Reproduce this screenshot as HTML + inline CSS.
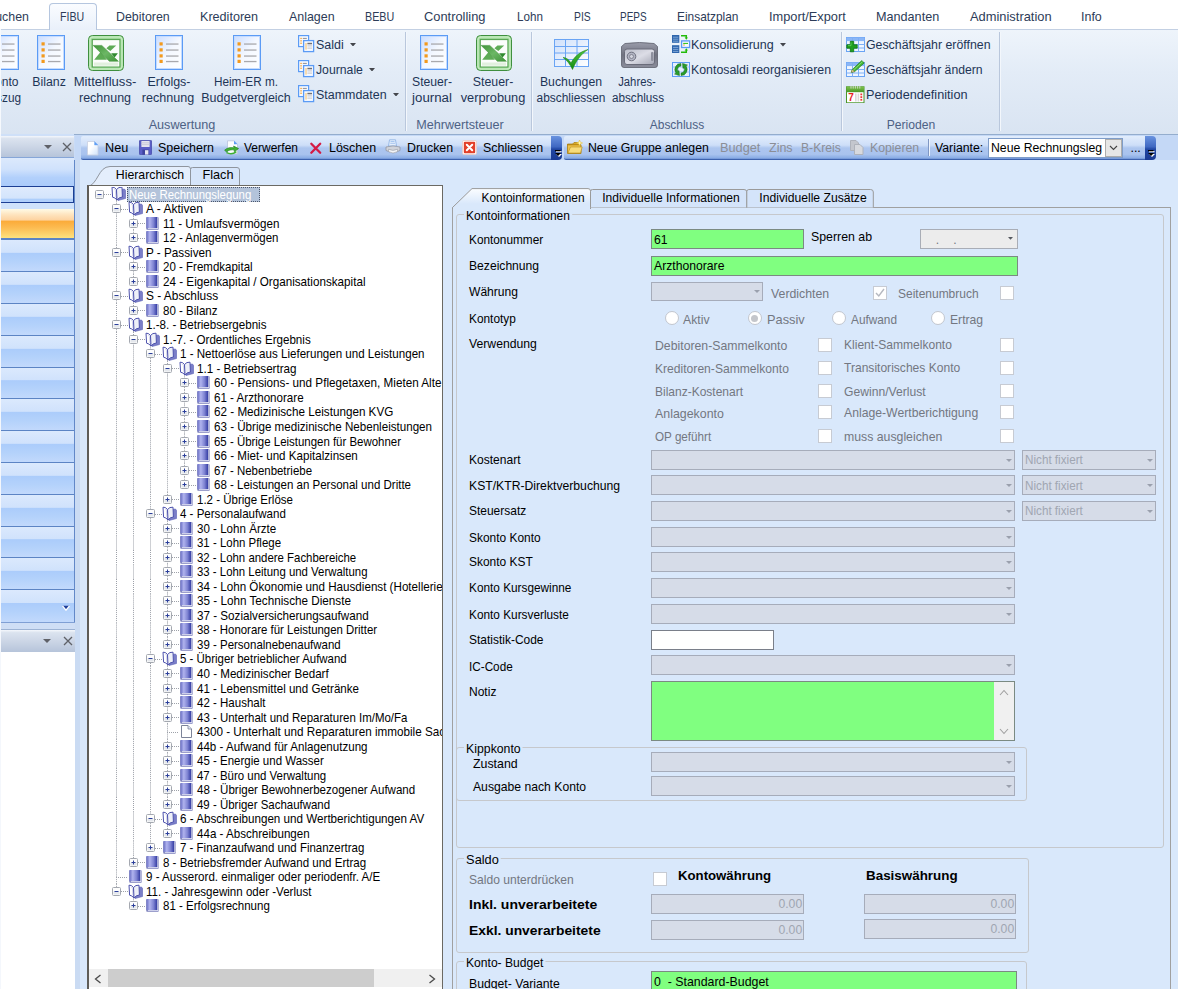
<!DOCTYPE html>
<html lang="de"><head><meta charset="utf-8"><title>FIBU - Kontenplan</title>
<style>
html,body{margin:0;padding:0;}
body{width:1178px;height:989px;overflow:hidden;background:#d9e8fb;font-family:"Liberation Sans",sans-serif;}
#app{position:relative;width:1178px;height:989px;overflow:hidden;background:#d9e8fb;}
.b{position:absolute;box-sizing:border-box;}
.t{position:absolute;white-space:nowrap;line-height:1;transform:translateY(-50%);color:#000;}
.ctr{transform:translate(-50%,-50%);}
.menu{font-size:13px;color:#2d3c58;}
.rib{font-size:12.3px;color:#1e3556;}
.glabel{color:#4d6185;}
.mtab{background:linear-gradient(#fafcff,#e9f0fa);border:1px solid #b5c6df;border-bottom:none;border-radius:4px 4px 0 0;}
.ribbon{background:linear-gradient(#eef4fb 0%,#e3ecf7 40%,#d9e4f2 100%);border-top:1px solid #c3d0e3;border-bottom:2px solid #94adcd;}
.shead{background:linear-gradient(#f4f7fc 0%,#dbe3ef 12%,#ccd6e6 50%,#b6c4da 100%);border-bottom:1px solid #86a6d8;}
.srow{background:linear-gradient(#dbe9fd 0%,#d0e2fc 40%,#abccfb 42%,#b4d2fb 70%,#c2d9fc 100%);border-top:1px solid #5c84c4;}
.sorange{background:linear-gradient(#fffbe6 0%,#fee3bd 20%,#fdd3a0 38%,#fbab3a 42%,#fcbc52 65%,#fee27e 100%);border-bottom:1px solid #5c84c4;}
.tbar{background:linear-gradient(#e2edfc 0%,#cddef8 40%,#adc6ef 52%,#a9c3ee 80%,#8dafe6 94%,#6d90d4 100%);border-bottom:1px solid #3d62ad;}
.tgrip{background:linear-gradient(#6a93df 0%,#3f68c2 45%,#2147a3 55%,#1a3a92 100%);border-radius:0 4px 4px 0;}
.tb{font-size:12.3px;color:#000;}
.tb.tdis{color:#8b8e96;}
.f12{font-size:12.2px;}
.f12b{font-size:12.2px;font-weight:bold;}
.gray{color:#737781;}
.lgray{color:#a0a6b2;}
.tr{font-size:12.8px;}
.dis{background:#d6dce8;border:1px solid #a6acba;}
.grn{background:#80ff80;border:1px solid #7b8a82;}

</style></head>
<body>
<div id="app">
<svg width="0" height="0" style="position:absolute"><defs><linearGradient id="bk" x1="0" y1="0" x2="1" y2="0"><stop offset="0" stop-color="#6a6fc4"/><stop offset=".3" stop-color="#b0b3ee"/><stop offset=".65" stop-color="#7e83d2"/><stop offset="1" stop-color="#3038a0"/></linearGradient></defs></svg>
<div class="b" style="left:0px;top:0px;width:1178px;height:30px;background:#fff;"></div>
<div class="b ribbon" style="left:1px;top:29px;width:1177px;height:106.5px;"></div>
<div class="b mtab" style="left:49px;top:3px;width:48px;height:27px;"></div>
<div class="t menu" style="left:-13px;top:15.7px;transform:translateY(-50%) scaleX(0.9502);transform-origin:0 50%;">Buchen</div>
<div class="t menu" style="left:60px;top:15.7px;transform:translateY(-50%) scaleX(0.8169);transform-origin:0 50%;">FIBU</div>
<div class="t menu" style="left:116px;top:15.7px;transform:translateY(-50%) scaleX(0.9525);transform-origin:0 50%;">Debitoren</div>
<div class="t menu" style="left:200px;top:15.7px;transform:translateY(-50%) scaleX(0.9686);transform-origin:0 50%;">Kreditoren</div>
<div class="t menu" style="left:289px;top:15.7px;transform:translateY(-50%) scaleX(0.9556);transform-origin:0 50%;">Anlagen</div>
<div class="t menu" style="left:364.5px;top:15.7px;transform:translateY(-50%) scaleX(0.8275);transform-origin:0 50%;">BEBU</div>
<div class="t menu" style="left:423.5px;top:15.7px;transform:translateY(-50%) scaleX(0.9894);transform-origin:0 50%;">Controlling</div>
<div class="t menu" style="left:516.5px;top:15.7px;transform:translateY(-50%) scaleX(0.8955);transform-origin:0 50%;">Lohn</div>
<div class="t menu" style="left:573.5px;top:15.7px;transform:translateY(-50%) scaleX(0.7964);transform-origin:0 50%;">PIS</div>
<div class="t menu" style="left:620.2px;top:15.7px;transform:translateY(-50%) scaleX(0.7668);transform-origin:0 50%;">PEPS</div>
<div class="t menu" style="left:677px;top:15.7px;transform:translateY(-50%) scaleX(0.9149);transform-origin:0 50%;">Einsatzplan</div>
<div class="t menu" style="left:768.8px;top:15.7px;transform:translateY(-50%) scaleX(0.9842);transform-origin:0 50%;">Import/Export</div>
<div class="t menu" style="left:876px;top:15.7px;transform:translateY(-50%) scaleX(0.9714);transform-origin:0 50%;">Mandanten</div>
<div class="t menu" style="left:969.5px;top:15.7px;transform:translateY(-50%) scaleX(0.9906);transform-origin:0 50%;">Administration</div>
<div class="t menu" style="left:1080.5px;top:15.7px;transform:translateY(-50%) scaleX(0.9591);transform-origin:0 50%;">Info</div>
<div class="b" style="left:405px;top:32px;width:1px;height:99px;background:#b9c7dc;"></div>
<div class="b" style="left:406px;top:32px;width:1px;height:99px;background:#f3f7fc;"></div>
<div class="b" style="left:531px;top:32px;width:1px;height:99px;background:#b9c7dc;"></div>
<div class="b" style="left:532px;top:32px;width:1px;height:99px;background:#f3f7fc;"></div>
<div class="b" style="left:840.5px;top:32px;width:1px;height:99px;background:#b9c7dc;"></div>
<div class="b" style="left:841.5px;top:32px;width:1px;height:99px;background:#f3f7fc;"></div>
<div class="b" style="left:999px;top:32px;width:1px;height:99px;background:#b9c7dc;"></div>
<div class="b" style="left:1000px;top:32px;width:1px;height:99px;background:#f3f7fc;"></div>
<div class="t rib glabel ctr" style="left:181.8px;top:125.3px;transform:translate(-50%,-50%) scaleX(1.0271);">Auswertung</div>
<div class="t rib glabel ctr" style="left:459.9px;top:125.3px;transform:translate(-50%,-50%) scaleX(1.0241);">Mehrwertsteuer</div>
<div class="t rib glabel ctr" style="left:677.1px;top:125.3px;transform:translate(-50%,-50%) scaleX(0.9706);">Abschluss</div>
<div class="t rib glabel ctr" style="left:910.5px;top:125.3px;transform:translate(-50%,-50%) scaleX(0.9871);">Perioden</div>
<svg class="b" style="left:-9px;top:35px;" width="28" height="35" viewBox="0 0 28 35"><defs><linearGradient id="lg1" x1="0" y1="0" x2="1" y2="1"><stop offset="0" stop-color="#c9dcff"/><stop offset=".5" stop-color="#f4f8ff"/><stop offset="1" stop-color="#ffffff"/></linearGradient></defs>
<rect x="0.5" y="0.5" width="27" height="34" fill="url(#lg1)" stroke="#5b9bf5" stroke-width="1"/>
<rect x="1.5" y="1.5" width="25" height="32" fill="none" stroke="#c4dbff" stroke-width="1"/><rect x="4.5" y="7.3" width="3.2" height="3.2" fill="#f39a1e"/><rect x="11" y="8.4" width="12.5" height="1.3" fill="#a9a9ad"/><rect x="4.5" y="13.3" width="3.2" height="3.2" fill="#f39a1e"/><rect x="11" y="14.4" width="12.5" height="1.3" fill="#a9a9ad"/><rect x="4.5" y="19.3" width="3.2" height="3.2" fill="#f39a1e"/><rect x="11" y="20.4" width="12.5" height="1.3" fill="#a9a9ad"/><rect x="4.5" y="24.8" width="3.2" height="3.2" fill="#f39a1e"/><rect x="11" y="25.9" width="12.5" height="1.3" fill="#a9a9ad"/></svg>
<div class="t rib" style="left:-13.3px;top:82.3px;transform:translateY(-50%) scaleX(0.9801);transform-origin:0 50%;">Konto</div>
<div class="t rib" style="left:-17px;top:98.3px;transform:translateY(-50%) scaleX(0.9582);transform-origin:0 50%;">auszug</div>
<svg class="b" style="left:37px;top:35px;" width="28" height="35" viewBox="0 0 28 35"><defs><linearGradient id="lg2" x1="0" y1="0" x2="1" y2="1"><stop offset="0" stop-color="#c9dcff"/><stop offset=".5" stop-color="#f4f8ff"/><stop offset="1" stop-color="#ffffff"/></linearGradient></defs>
<rect x="0.5" y="0.5" width="27" height="34" fill="url(#lg2)" stroke="#5b9bf5" stroke-width="1"/>
<rect x="1.5" y="1.5" width="25" height="32" fill="none" stroke="#c4dbff" stroke-width="1"/><rect x="4.5" y="7.3" width="3.2" height="3.2" fill="#f39a1e"/><rect x="11" y="8.4" width="12.5" height="1.3" fill="#a9a9ad"/><rect x="4.5" y="13.3" width="3.2" height="3.2" fill="#f39a1e"/><rect x="11" y="14.4" width="12.5" height="1.3" fill="#a9a9ad"/><rect x="4.5" y="19.3" width="3.2" height="3.2" fill="#f39a1e"/><rect x="11" y="20.4" width="12.5" height="1.3" fill="#a9a9ad"/><rect x="4.5" y="24.8" width="3.2" height="3.2" fill="#f39a1e"/><rect x="11" y="25.9" width="12.5" height="1.3" fill="#a9a9ad"/></svg>
<div class="t rib ctr" style="left:48.9px;top:82.3px;transform:translate(-50%,-50%) scaleX(1.0030);">Bilanz</div>
<svg class="b" style="left:88px;top:35px;" width="36" height="36" viewBox="0 0 36 36"><defs><linearGradient id="xg1" x1="0" y1="0" x2="1" y2="1"><stop offset="0" stop-color="#3f9438"/><stop offset=".5" stop-color="#6cb765"/><stop offset="1" stop-color="#3f9438"/></linearGradient></defs>
<rect x="0.5" y="0.5" width="35" height="35" rx="4" fill="#9fd89a" stroke="#3f8f3f"/>
<rect x="2" y="2" width="32" height="32" rx="3" fill="none" stroke="#c4ebbf" stroke-width="1.4"/>
<rect x="4.3" y="4.6" width="27.6" height="27.4" fill="#fbfdfb" stroke="#4fa04a" stroke-width="1"/>
<rect x="6" y="27.5" width="24" height="3.2" fill="#e1f0de"/>
<path d="M6.2 24.8 L12.5 17 L19 24.8 Z" fill="#5dab55"/>
<path d="M21.4 10.4 H28.2 L22.3 16 L18.4 13.2 Z" fill="#5dab55"/>
<path d="M23.1 18.3 H29.9 L26.6 22.6 Z" fill="#2f8a2e"/>
<path d="M5.1 10.4 H13.8 L30.4 26.3 H21.4 Z" fill="url(#xg1)" stroke="#3a8c35" stroke-width=".5"/></svg>
<div class="t rib ctr" style="left:105.4px;top:82.3px;transform:translate(-50%,-50%) scaleX(1.0652);">Mittelfluss-</div>
<div class="t rib ctr" style="left:105px;top:98.3px;transform:translate(-50%,-50%) scaleX(1.0140);">rechnung</div>
<svg class="b" style="left:155px;top:35px;" width="28" height="35" viewBox="0 0 28 35"><defs><linearGradient id="lg3" x1="0" y1="0" x2="1" y2="1"><stop offset="0" stop-color="#c9dcff"/><stop offset=".5" stop-color="#f4f8ff"/><stop offset="1" stop-color="#ffffff"/></linearGradient></defs>
<rect x="0.5" y="0.5" width="27" height="34" fill="url(#lg3)" stroke="#5b9bf5" stroke-width="1"/>
<rect x="1.5" y="1.5" width="25" height="32" fill="none" stroke="#c4dbff" stroke-width="1"/><rect x="4.5" y="7.3" width="3.2" height="3.2" fill="#f39a1e"/><rect x="11" y="8.4" width="12.5" height="1.3" fill="#a9a9ad"/><rect x="4.5" y="13.3" width="3.2" height="3.2" fill="#f39a1e"/><rect x="11" y="14.4" width="12.5" height="1.3" fill="#a9a9ad"/><rect x="4.5" y="19.3" width="3.2" height="3.2" fill="#f39a1e"/><rect x="11" y="20.4" width="12.5" height="1.3" fill="#a9a9ad"/><rect x="4.5" y="24.8" width="3.2" height="3.2" fill="#f39a1e"/><rect x="11" y="25.9" width="12.5" height="1.3" fill="#a9a9ad"/></svg>
<div class="t rib ctr" style="left:168.7px;top:82.3px;transform:translate(-50%,-50%) scaleX(1.0147);">Erfolgs-</div>
<div class="t rib ctr" style="left:168.3px;top:98.3px;transform:translate(-50%,-50%) scaleX(1.0218);">rechnung</div>
<svg class="b" style="left:232.5px;top:35px;" width="28" height="35" viewBox="0 0 28 35"><defs><linearGradient id="lg4" x1="0" y1="0" x2="1" y2="1"><stop offset="0" stop-color="#c9dcff"/><stop offset=".5" stop-color="#f4f8ff"/><stop offset="1" stop-color="#ffffff"/></linearGradient></defs>
<rect x="0.5" y="0.5" width="27" height="34" fill="url(#lg4)" stroke="#5b9bf5" stroke-width="1"/>
<rect x="1.5" y="1.5" width="25" height="32" fill="none" stroke="#c4dbff" stroke-width="1"/><rect x="4.5" y="7.3" width="3.2" height="3.2" fill="#f39a1e"/><rect x="11" y="8.4" width="12.5" height="1.3" fill="#a9a9ad"/><rect x="4.5" y="13.3" width="3.2" height="3.2" fill="#f39a1e"/><rect x="11" y="14.4" width="12.5" height="1.3" fill="#a9a9ad"/><rect x="4.5" y="19.3" width="3.2" height="3.2" fill="#f39a1e"/><rect x="11" y="20.4" width="12.5" height="1.3" fill="#a9a9ad"/><rect x="4.5" y="24.8" width="3.2" height="3.2" fill="#f39a1e"/><rect x="11" y="25.9" width="12.5" height="1.3" fill="#a9a9ad"/></svg>
<div class="t rib ctr" style="left:245.5px;top:82.3px;transform:translate(-50%,-50%) scaleX(0.9574);">Heim-ER m.</div>
<div class="t rib ctr" style="left:245.5px;top:98.3px;transform:translate(-50%,-50%) scaleX(1.0160);">Budgetvergleich</div>
<svg class="b" style="left:298px;top:34.8px;" width="17" height="18" viewBox="0 0 17 18"><rect x="0.6" y="0.6" width="10" height="11" fill="#f7faff" stroke="#5b9bf5" stroke-width="1.2"/>
<g fill="#f39a1e"><rect x="2.4" y="2.8" width="1.3" height="1.3"/><rect x="2.4" y="5.2" width="1.3" height="1.3"/><rect x="2.4" y="7.6" width="1.3" height="1.3"/></g><path d="M4.8 3.4 H8.8" stroke="#8d8d93" stroke-width="1"/>
<rect x="5.6" y="5.6" width="10" height="11" fill="#f7faff" stroke="#5b9bf5" stroke-width="1.3"/>
<rect x="7.4" y="8" width="1.2" height="6.6" fill="#f7c777"/><rect x="9.4" y="7.8" width="4.6" height="1.5" fill="#6f6f75"/><rect x="9.4" y="10.4" width="4.6" height="1" fill="#c3c3c8"/><rect x="9.4" y="12.6" width="4.6" height="1" fill="#c3c3c8"/></svg>
<div class="t rib" style="left:316.2px;top:45.099999999999994px;transform:translateY(-50%) scaleX(1.0161);transform-origin:0 50%;">Saldi</div>
<svg class="b" style="left:350px;top:42.8px;" width="6" height="3.5" viewBox="0 0 6 3.5"><path d="M0 0 H6 L3.0 3.5 Z" fill="#44464c"/></svg>
<svg class="b" style="left:298px;top:59.8px;" width="17" height="18" viewBox="0 0 17 18"><rect x="0.6" y="0.6" width="10" height="11" fill="#f7faff" stroke="#5b9bf5" stroke-width="1.2"/>
<g fill="#f39a1e"><rect x="2.4" y="2.8" width="1.3" height="1.3"/><rect x="2.4" y="5.2" width="1.3" height="1.3"/><rect x="2.4" y="7.6" width="1.3" height="1.3"/></g><path d="M4.8 3.4 H8.8" stroke="#8d8d93" stroke-width="1"/>
<rect x="5.6" y="5.6" width="10" height="11" fill="#f7faff" stroke="#5b9bf5" stroke-width="1.3"/>
<rect x="7.4" y="8" width="1.2" height="6.6" fill="#f7c777"/><rect x="9.4" y="7.8" width="4.6" height="1.5" fill="#6f6f75"/><rect x="9.4" y="10.4" width="4.6" height="1" fill="#c3c3c8"/><rect x="9.4" y="12.6" width="4.6" height="1" fill="#c3c3c8"/></svg>
<div class="t rib" style="left:316.2px;top:70.1px;transform:translateY(-50%) scaleX(0.9942);transform-origin:0 50%;">Journale</div>
<svg class="b" style="left:369px;top:67.8px;" width="6" height="3.5" viewBox="0 0 6 3.5"><path d="M0 0 H6 L3.0 3.5 Z" fill="#44464c"/></svg>
<svg class="b" style="left:298px;top:84.8px;" width="17" height="18" viewBox="0 0 17 18"><rect x="0.6" y="0.6" width="10" height="11" fill="#f7faff" stroke="#5b9bf5" stroke-width="1.2"/>
<g fill="#f39a1e"><rect x="2.4" y="2.8" width="1.3" height="1.3"/><rect x="2.4" y="5.2" width="1.3" height="1.3"/><rect x="2.4" y="7.6" width="1.3" height="1.3"/></g><path d="M4.8 3.4 H8.8" stroke="#8d8d93" stroke-width="1"/>
<rect x="5.6" y="5.6" width="10" height="11" fill="#f7faff" stroke="#5b9bf5" stroke-width="1.3"/>
<rect x="7.4" y="8" width="1.2" height="6.6" fill="#f7c777"/><rect x="9.4" y="7.8" width="4.6" height="1.5" fill="#6f6f75"/><rect x="9.4" y="10.4" width="4.6" height="1" fill="#c3c3c8"/><rect x="9.4" y="12.6" width="4.6" height="1" fill="#c3c3c8"/></svg>
<div class="t rib" style="left:316.2px;top:95.1px;transform:translateY(-50%) scaleX(1.0126);transform-origin:0 50%;">Stammdaten</div>
<svg class="b" style="left:393px;top:92.8px;" width="6" height="3.5" viewBox="0 0 6 3.5"><path d="M0 0 H6 L3.0 3.5 Z" fill="#44464c"/></svg>
<svg class="b" style="left:420.4px;top:35px;" width="28" height="35" viewBox="0 0 28 35"><defs><linearGradient id="lg5" x1="0" y1="0" x2="1" y2="1"><stop offset="0" stop-color="#c9dcff"/><stop offset=".5" stop-color="#f4f8ff"/><stop offset="1" stop-color="#ffffff"/></linearGradient></defs>
<rect x="0.5" y="0.5" width="27" height="34" fill="url(#lg5)" stroke="#5b9bf5" stroke-width="1"/>
<rect x="1.5" y="1.5" width="25" height="32" fill="none" stroke="#c4dbff" stroke-width="1"/><rect x="4.5" y="7.3" width="3.2" height="3.2" fill="#f39a1e"/><rect x="11" y="8.4" width="12.5" height="1.3" fill="#a9a9ad"/><rect x="4.5" y="13.3" width="3.2" height="3.2" fill="#f39a1e"/><rect x="11" y="14.4" width="12.5" height="1.3" fill="#a9a9ad"/><rect x="4.5" y="19.3" width="3.2" height="3.2" fill="#f39a1e"/><rect x="11" y="20.4" width="12.5" height="1.3" fill="#a9a9ad"/><rect x="4.5" y="24.8" width="3.2" height="3.2" fill="#f39a1e"/><rect x="11" y="25.9" width="12.5" height="1.3" fill="#a9a9ad"/></svg>
<div class="t rib ctr" style="left:432.2px;top:82.3px;transform:translate(-50%,-50%) scaleX(0.9919);">Steuer-</div>
<div class="t rib ctr" style="left:431.6px;top:98.3px;transform:translate(-50%,-50%) scaleX(1.0780);">journal</div>
<svg class="b" style="left:476px;top:35px;" width="36" height="36" viewBox="0 0 36 36"><defs><linearGradient id="xg2" x1="0" y1="0" x2="1" y2="1"><stop offset="0" stop-color="#3f9438"/><stop offset=".5" stop-color="#6cb765"/><stop offset="1" stop-color="#3f9438"/></linearGradient></defs>
<rect x="0.5" y="0.5" width="35" height="35" rx="4" fill="#9fd89a" stroke="#3f8f3f"/>
<rect x="2" y="2" width="32" height="32" rx="3" fill="none" stroke="#c4ebbf" stroke-width="1.4"/>
<rect x="4.3" y="4.6" width="27.6" height="27.4" fill="#fbfdfb" stroke="#4fa04a" stroke-width="1"/>
<rect x="6" y="27.5" width="24" height="3.2" fill="#e1f0de"/>
<path d="M6.2 24.8 L12.5 17 L19 24.8 Z" fill="#5dab55"/>
<path d="M21.4 10.4 H28.2 L22.3 16 L18.4 13.2 Z" fill="#5dab55"/>
<path d="M23.1 18.3 H29.9 L26.6 22.6 Z" fill="#2f8a2e"/>
<path d="M5.1 10.4 H13.8 L30.4 26.3 H21.4 Z" fill="url(#xg2)" stroke="#3a8c35" stroke-width=".5"/></svg>
<div class="t rib ctr" style="left:493px;top:82.3px;transform:translate(-50%,-50%) scaleX(1.0043);">Steuer-</div>
<div class="t rib ctr" style="left:493px;top:98.3px;transform:translate(-50%,-50%) scaleX(1.0399);">verprobung</div>
<div class="t rib ctr" style="left:570.8px;top:82.3px;transform:translate(-50%,-50%) scaleX(0.9994);">Buchungen</div>
<div class="t rib ctr" style="left:571.2px;top:98.3px;transform:translate(-50%,-50%) scaleX(0.9677);">abschliessen</div>
<div class="t rib ctr" style="left:637.3px;top:82.3px;transform:translate(-50%,-50%) scaleX(0.9167);">Jahres-</div>
<div class="t rib ctr" style="left:637.9px;top:98.3px;transform:translate(-50%,-50%) scaleX(0.9509);">abschluss</div>
<div class="t rib" style="left:691.2px;top:45.3px;transform:translateY(-50%) scaleX(1.0165);transform-origin:0 50%;">Konsolidierung</div>
<svg class="b" style="left:780px;top:43px;" width="6" height="3.5" viewBox="0 0 6 3.5"><path d="M0 0 H6 L3.0 3.5 Z" fill="#44464c"/></svg>
<div class="t rib" style="left:691.2px;top:69.8px;transform:translateY(-50%) scaleX(1.0046);transform-origin:0 50%;">Kontosaldi reorganisieren</div>
<div class="t rib" style="left:865.5px;top:45.2px;transform:translateY(-50%) scaleX(1.0025);transform-origin:0 50%;">Geschäftsjahr eröffnen</div>
<div class="t rib" style="left:865.5px;top:70px;transform:translateY(-50%) scaleX(0.9917);transform-origin:0 50%;">Geschäftsjahr ändern</div>
<div class="t rib" style="left:865.5px;top:95.1px;transform:translateY(-50%) scaleX(1.0309);transform-origin:0 50%;">Periodendefinition</div>
<svg class="b" style="left:554px;top:38.5px;" width="36" height="32" viewBox="0 0 36 32"><defs><linearGradient id="tcg" x1="0" y1="0" x2="1" y2="1"><stop offset="0" stop-color="#cfe0fb"/><stop offset="1" stop-color="#ffffff"/></linearGradient>
<linearGradient id="chk" x1="0" y1="0" x2="0" y2="1"><stop offset="0" stop-color="#4fc63c"/><stop offset="1" stop-color="#148a12"/></linearGradient></defs>
<rect x=".5" y=".5" width="34" height="27" fill="url(#tcg)" stroke="#6aa4f4"/>
<path d="M.5 7.5 H34.5 M.5 14 H34.5 M.5 20.5 H34.5 M11.5 .5 V27.5 M23 .5 V27.5" stroke="#6aa4f4" stroke-width="1" fill="none"/>
<path d="M9 18.5 C12 18.5 15 20.5 17 24 C20 18 26 12.5 34 10.5 C27 15 22 22 18.5 30.5 C16 25.5 13 21 9 18.5 Z" fill="url(#chk)" stroke="#0f7a10" stroke-width=".5"/></svg>
<svg class="b" style="left:621px;top:41.5px;" width="37" height="26" viewBox="0 0 37 26"><defs><linearGradient id="sfg" x1="0" y1="0" x2="0" y2="1"><stop offset="0" stop-color="#9a9caa"/><stop offset=".5" stop-color="#70727f"/><stop offset="1" stop-color="#8b8d9b"/></linearGradient>
<linearGradient id="sfd" x1="0" y1="0" x2="1" y2="1"><stop offset="0" stop-color="#b9bbc8"/><stop offset=".5" stop-color="#dcdde6"/><stop offset="1" stop-color="#a4a6b4"/></linearGradient></defs>
<path d="M4 1.5 Q18.5 -.5 33 1.5 L36.5 4.5 V23 Q36.5 25.5 34 25.5 H3 Q.5 25.5 .5 23 V4.5 Z" fill="url(#sfg)" stroke="#5d5f6c" stroke-width=".8"/>
<rect x="3.5" y="7" width="30" height="15.5" rx="2.5" fill="url(#sfd)" stroke="#6a6c7a" stroke-width="1"/>
<circle cx="10.5" cy="14.5" r="4.3" fill="#b3b5c3" stroke="#6f7180" stroke-width="1"/><circle cx="10.5" cy="14.5" r="2" fill="#d3d4de" stroke="#777987" stroke-width=".8"/>
<rect x="30" y="10" width="2.5" height="9" rx="1" fill="#8e909e"/></svg>
<svg class="b" style="left:672px;top:34.8px;" width="18.5" height="18.5" viewBox="0 0 18.5 18.5"><rect x="0" y="0" width="7.3" height="7.8" fill="#2f66ad"/><path d="M1 2.2 H6.3 M1 4.2 H6.3 M1 6.2 H6.3" stroke="#86abd9" stroke-width=".9"/>
<rect x="0" y="10.2" width="7.3" height="7.8" fill="#2f66ad"/><path d="M1 12.4 H6.3 M1 14.4 H6.3 M1 16.4 H6.3" stroke="#86abd9" stroke-width=".9"/>
<path d="M9 .8 H14.3 V3" stroke="#22bb0a" stroke-width="1.5" fill="none"/><path d="M12.6 2.6 H16 L14.3 4.8 Z" fill="#22bb0a"/>
<path d="M9 17.3 H14.3 V15" stroke="#22bb0a" stroke-width="1.5" fill="none"/><path d="M12.6 15.4 H16 L14.3 13.3 Z" fill="#22bb0a"/>
<rect x="9.6" y="5.9" width="8" height="6.6" fill="#f4f9ff" stroke="#5b9bf5" stroke-width="1.3"/><path d="M11.2 8.4 H16" stroke="#22bb0a" stroke-width="1"/><path d="M11.2 10 H12.8" stroke="#f39a1e" stroke-width="1"/></svg>
<svg class="b" style="left:672px;top:62px;" width="18" height="15" viewBox="0 0 18 15"><rect x=".5" y=".5" width="17" height="14" fill="#e6f0ff" stroke="#5b9bf5"/><path d="M.5 5 H17.5 M.5 10 H17.5 M6 .5 V14.5 M12 .5 V14.5" stroke="#8ab6f7" stroke-width=".8"/>
<path d="M9 1.5 A6 6 0 0 0 4 11 L2.5 12 L7.5 13.5 L7 8.5 L5.8 9.6 A3.8 3.8 0 0 1 9 4 Z" fill="#2a9d2a" stroke="#156d18" stroke-width=".5"/>
<path d="M9 13.5 A6 6 0 0 0 14 4 L15.5 3 L10.5 1.5 L11 6.5 L12.2 5.4 A3.8 3.8 0 0 1 9 11 Z" fill="#2a9d2a" stroke="#156d18" stroke-width=".5"/></svg>
<svg class="b" style="left:846px;top:37px;" width="19" height="16" viewBox="0 0 19 16"><rect x=".5" y=".5" width="18" height="14" fill="#eef5ff" stroke="#6aa4f4"/><rect x=".5" y=".5" width="18" height="3.6" fill="#8ab6f7"/><path d="M.5 7.5 H18.5 M.5 11 H18.5 M6.5 .5 V14.5 M12.5 .5 V14.5" stroke="#7fb0f5" stroke-width="1"/>
<path d="M4.3 4.3 H7.7 V7.8 H11.2 V11.2 H7.7 V14.8 H4.3 V11.2 H.8 V7.8 H4.3 Z" fill="#1fa01f" stroke="#0c7410" stroke-width=".8"/><path d="M5 5.5 V8.6 H2" stroke="#5fd65a" stroke-width=".8" fill="none"/></svg>
<svg class="b" style="left:846px;top:60px;" width="19" height="17" viewBox="0 0 19 17"><rect x=".5" y="2.5" width="18" height="14" fill="#eef5ff" stroke="#6aa4f4"/><rect x=".5" y="2.5" width="18" height="3.6" fill="#8ab6f7"/><path d="M.5 9.5 H18.5 M.5 13 H18.5 M6.5 2.5 V16.5 M12.5 2.5 V16.5" stroke="#7fb0f5" stroke-width="1"/>
<path d="M5.3 12.3 L6.3 9.5 L15.8 .6 L18.2 2.9 L8.7 11.6 Z" fill="#45b838" stroke="#1f7d1f" stroke-width=".7"/><path d="M7.4 10.2 L16.6 1.6" stroke="#8fe07f" stroke-width=".8"/><path d="M5.3 12.3 L6.3 9.5 L8.7 11.6 Z" fill="#f2d9a0" stroke="#7a5c1e" stroke-width=".4"/></svg>
<svg class="b" style="left:846px;top:85.6px;" width="19" height="17.5" viewBox="0 0 19 17.5"><defs><linearGradient id="pdg" x1="0" y1="0" x2="0" y2="1"><stop offset="0" stop-color="#7cc24a"/><stop offset="1" stop-color="#4a9628"/></linearGradient></defs>
<rect x=".5" y=".8" width="17.5" height="16" fill="#fff" stroke="#4a9628"/><rect x=".5" y=".8" width="17.5" height="5.4" fill="url(#pdg)"/>
<path d="M5 0 V2.6 M7.2 0 V2.6 M9.4 0 V2.6 M11.6 0 V2.6 M13.8 0 V2.6" stroke="#c9d6c0" stroke-width="1"/>
<g fill="#d9d9d9"><rect x="9" y="7.5" width="1.6" height="8"/><rect x="11.6" y="7.5" width="1.6" height="8"/></g><g fill="#ee3a3a"><rect x="14.4" y="7.5" width="1.8" height="1.8"/><rect x="14.4" y="10.2" width="1.8" height="1.8"/><rect x="14.4" y="12.9" width="1.8" height="1.8"/></g>
<text x="2.2" y="15" font-family="Liberation Sans, sans-serif" font-weight="bold" font-size="10" fill="#e8201c">7</text></svg>
<div class="b" style="left:0px;top:29px;width:1.3px;height:105px;background:#f6f9fd;"></div>
<div class="b" style="left:0px;top:134px;width:74px;height:855px;background:#cfe0f8;"></div>
<div class="b shead" style="left:0px;top:135.5px;width:74px;height:22.5px;"></div>
<svg class="b" style="left:44px;top:145px;" width="8" height="4" viewBox="0 0 8 4"><path d="M0 0 H8 L4 4 Z" fill="#5f6168"/></svg>
<svg class="b" style="left:62px;top:142px;" width="10" height="10" viewBox="0 0 10 10"><path d="M1 1 L9 9 M9 1 L1 9" stroke="#5f6168" stroke-width="1.3" fill="none"/></svg>
<div class="b" style="left:0px;top:158px;width:74px;height:28px;background:linear-gradient(#dce9fc 0%,#d0e2fc 40%,#b2d0fb 70%,#aacbfb 100%);"></div>
<div class="b" style="left:-2px;top:186px;width:75.5px;height:17px;background:linear-gradient(#dfebfd 0%,#d3e4fc 75%,#accdfb 80%,#b4d2fb 100%);border:1.5px solid #1c3f94;"></div>
<div class="b" style="left:0px;top:203px;width:74px;height:6px;background:#cfe2fb;"></div>
<div class="b sorange" style="left:0px;top:208.5px;width:74px;height:30.5px;"></div>
<div class="b srow" style="left:0px;top:239px;width:74px;height:32px;"></div>
<div class="b srow" style="left:0px;top:271px;width:74px;height:32px;"></div>
<div class="b srow" style="left:0px;top:303px;width:74px;height:32px;"></div>
<div class="b srow" style="left:0px;top:335px;width:74px;height:31.5px;"></div>
<div class="b srow" style="left:0px;top:366.5px;width:74px;height:31.5px;"></div>
<div class="b srow" style="left:0px;top:398px;width:74px;height:32px;"></div>
<div class="b srow" style="left:0px;top:430px;width:74px;height:32px;"></div>
<div class="b srow" style="left:0px;top:462px;width:74px;height:32px;"></div>
<div class="b srow" style="left:0px;top:494px;width:74px;height:31.5px;"></div>
<div class="b srow" style="left:0px;top:525.5px;width:74px;height:31.5px;"></div>
<div class="b srow" style="left:0px;top:557px;width:74px;height:32px;"></div>
<div class="b srow" style="left:0px;top:589px;width:74px;height:33px;"></div>
<svg class="b" style="left:61.5px;top:604.5px;" width="8" height="6" viewBox="0 0 8 6"><path d="M.5 .8 L4 5.2 L7.5 .8" fill="#1f3f9a" stroke="#fff" stroke-width="1.3"/></svg>
<div class="b" style="left:0px;top:621.5px;width:75px;height:8px;background:#cfdef5;border-top:1px solid #7f9fd4;"></div>
<div class="b shead" style="left:0px;top:629px;width:75px;height:22.5px;border-top:1px solid #9db3d4;border-bottom:none;"></div>
<svg class="b" style="left:42.5px;top:639px;" width="8" height="4" viewBox="0 0 8 4"><path d="M0 0 H8 L4 4 Z" fill="#5f6168"/></svg>
<svg class="b" style="left:62.5px;top:636px;" width="10" height="10" viewBox="0 0 10 10"><path d="M1 1 L9 9 M9 1 L1 9" stroke="#5f6168" stroke-width="1.3" fill="none"/></svg>
<div class="b" style="left:1px;top:651.5px;width:74px;height:338px;background:#fff;"></div>
<div class="b" style="left:74px;top:158px;width:1px;height:463.5px;background:#6288c8;"></div>
<div class="b" style="left:0px;top:134px;width:1px;height:855px;background:#f4f7fc;"></div>
<div class="b" style="left:75px;top:160px;width:5px;height:829px;background:#cadbf3;"></div>
<div class="b" style="left:74px;top:135px;width:7px;height:25px;background:#c9dbf6;"></div>
<div class="b" style="left:75px;top:135px;width:1103px;height:25px;background:#c4d8f6;"></div>
<div class="b tbar" style="left:81px;top:135.5px;width:471px;height:24px;border-radius:2px 0 0 2px;"></div>
<div class="b tgrip" style="left:551px;top:135.5px;width:11px;height:24px;"></div>
<svg class="b" style="left:554.5px;top:150px;" width="8" height="8" viewBox="0 0 8 8"><rect x="1" y="1" width="5.5" height="1.3" fill="#fff"/><path d="M1 4 H7 L4 7 Z" fill="#fff"/><rect x="0" y="0" width="5.5" height="1.3" fill="#000"/><path d="M0 3 H6 L3 6 Z" fill="#000"/></svg>
<div class="b tbar" style="left:564px;top:135.5px;width:581px;height:24px;border-radius:2px 0 0 2px;"></div>
<div class="b tgrip" style="left:1144.5px;top:135.5px;width:11.5px;height:24px;"></div>
<svg class="b" style="left:1148px;top:150px;" width="8" height="8" viewBox="0 0 8 8"><rect x="1" y="1" width="5.5" height="1.3" fill="#fff"/><path d="M1 4 H7 L4 7 Z" fill="#fff"/><rect x="0" y="0" width="5.5" height="1.3" fill="#000"/><path d="M0 3 H6 L3 6 Z" fill="#000"/></svg>
<svg class="b" style="left:86.5px;top:141px;" width="12" height="15" viewBox="0 0 12 15"><defs><linearGradient id="nw" x1="0" y1="0" x2="1" y2="1"><stop offset=".4" stop-color="#ffffff"/><stop offset="1" stop-color="#cfe2fb"/></linearGradient></defs><path d="M.5 .5 H7.5 L11 4 V14 H.5 Z" fill="url(#nw)" stroke="#c9cfe0" stroke-width=".8"/><path d="M7.5 .5 L11 4 H7.5 Z" fill="#5b9bf5" stroke="#7fb0f5" stroke-width=".5"/></svg>
<div class="t tb" style="left:104.6px;top:148px;transform:translateY(-50%) scaleX(1.0283);transform-origin:0 50%;">Neu</div>
<svg class="b" style="left:139px;top:140px;" width="13" height="15" viewBox="0 0 13 15"><rect x=".4" y=".4" width="12.2" height="14.2" rx=".8" fill="#5a5ec6" stroke="#454aa8" stroke-width=".8"/><rect x="2.4" y="1" width="8.2" height="6" fill="#e4e4ee"/><path d="M2.4 2.8 H10.6 M2.4 4.6 H10.6" stroke="#c4c4d6" stroke-width=".8"/><rect x="3.4" y="9.6" width="6.4" height="5" fill="#3f449e"/><rect x="6" y="10.2" width="3.4" height="4.4" fill="#e8e8f2"/></svg>
<div class="t tb" style="left:157.9px;top:148px;transform:translateY(-50%) scaleX(1.0113);transform-origin:0 50%;">Speichern</div>
<svg class="b" style="left:223.5px;top:139.5px;" width="16" height="15" viewBox="0 0 16 15"><path d="M3.5 .8 H10 L13.5 4.2 V13.8 H3.5 Z" fill="#fbfdff" stroke="#b9c4dc" stroke-width=".8"/><path d="M10 .8 L13.5 4.2 H10 Z" fill="#5b9bf5"/><path d="M.6 10.2 C3 7.6 7 7 10 8 L9.6 6 L14.6 8.6 L10.4 11.8 L10.2 10 C7.5 9.4 4.5 10 2.6 12 Z" fill="#3fb032" stroke="#1e7d1e" stroke-width=".6"/><path d="M2.6 12.6 C5.5 14 9.5 13.8 12.4 11.6" stroke="#3fb032" stroke-width="1.5" fill="none"/></svg>
<div class="t tb" style="left:244.4px;top:148px;transform:translateY(-50%) scaleX(0.9752);transform-origin:0 50%;">Verwerfen</div>
<svg class="b" style="left:309px;top:141.5px;" width="14" height="13" viewBox="0 0 14 13"><path d="M2.3 1.8 L11.2 10.8 M11.2 1.8 L2.3 10.8" stroke="#d41a44" stroke-width="2.3" stroke-linecap="round"/></svg>
<div class="t tb" style="left:329.2px;top:148px;transform:translateY(-50%) scaleX(1.0129);transform-origin:0 50%;">Löschen</div>
<svg class="b" style="left:385px;top:139px;" width="16" height="16" viewBox="0 0 16 16"><path d="M4.5 .8 H10.5 L11.5 7 H3.5 Z" fill="#e3eefc" stroke="#7fa8e0" stroke-width=".7"/><path d="M5.5 2.5 H9.5 M5.3 4.3 H10" stroke="#8db4ea" stroke-width=".7"/><path d="M1 8 Q8 5.8 15 8 V11.5 Q8 15 1 11.5 Z" fill="#d0d3da" stroke="#8d919c" stroke-width=".7"/><path d="M3.5 10.2 Q8 12.6 12.5 10.2 V12.6 Q8 15.6 3.5 12.6 Z" fill="#f3f4f7" stroke="#9a9ea8" stroke-width=".6"/></svg>
<div class="t tb" style="left:406.6px;top:148px;transform:translateY(-50%) scaleX(1.0066);transform-origin:0 50%;">Drucken</div>
<svg class="b" style="left:462.3px;top:140.2px;" width="15" height="15" viewBox="0 0 15 15"><rect x=".5" y=".5" width="14" height="14" rx="1.5" fill="#fff" stroke="#e8c9c4" stroke-width=".8"/><rect x="1.8" y="1.8" width="11.4" height="11.4" rx="1" fill="#e2402a"/><path d="M4.8 4.8 L10.2 10.2 M10.2 4.8 L4.8 10.2" stroke="#fff" stroke-width="2" stroke-linecap="round"/></svg>
<div class="t tb" style="left:483px;top:148px;transform:translateY(-50%) scaleX(1.0106);transform-origin:0 50%;">Schliessen</div>
<svg class="b" style="left:566.5px;top:139.5px;" width="16" height="15" viewBox="0 0 16 15"><path d="M.5 4 H5.5 L7 2.5 H12 V5 H.5 Z" fill="#d9a928" stroke="#a87c10" stroke-width=".7"/><path d="M.5 4.8 H14 V13.5 H.5 Z" fill="#eec24a" stroke="#a87c10" stroke-width=".8"/><path d="M1 13 L3.5 7 H15.2 L13.5 13 Z" fill="#f7dc7c" stroke="#b98d1a" stroke-width=".6"/><path d="M12.5 0 L13.3 2.2 L15.5 3 L13.3 3.8 L12.5 6 L11.7 3.8 L9.5 3 L11.7 2.2 Z" fill="#fff9b8" stroke="#e8bc22" stroke-width=".5"/></svg>
<div class="t tb" style="left:588.2px;top:148px;transform:translateY(-50%) scaleX(0.9982);transform-origin:0 50%;">Neue Gruppe anlegen</div>
<div class="t tb tdis" style="left:719.5px;top:148px;transform:translateY(-50%) scaleX(1.0363);transform-origin:0 50%;">Budget</div>
<div class="t tb tdis" style="left:768.8px;top:148px;transform:translateY(-50%) scaleX(1.0157);transform-origin:0 50%;">Zins</div>
<div class="t tb tdis" style="left:801.4px;top:148px;transform:translateY(-50%) scaleX(0.9869);transform-origin:0 50%;">B-Kreis</div>
<svg class="b" style="left:849.5px;top:140px;" width="14" height="15" viewBox="0 0 14 15"><path d="M.5 .5 H6 L8.5 3 V10.5 H.5 Z" fill="#c3c6cd" stroke="#aeb2bb"/><path d="M4.5 4.5 H10 L13 7.5 V14.5 H4.5 Z" fill="#d7d9de" stroke="#aeb2bb"/></svg>
<div class="t tb tdis" style="left:869.6px;top:148px;transform:translateY(-50%) scaleX(0.9993);transform-origin:0 50%;">Kopieren</div>
<div class="b" style="left:928px;top:139px;width:1px;height:17px;background:#7f97c4;"></div>
<div class="b" style="left:929px;top:139px;width:1px;height:17px;background:#eef4fd;"></div>
<div class="t tb" style="left:935.2px;top:148px;transform:translateY(-50%) scaleX(0.9977);transform-origin:0 50%;">Variante:</div>
<div class="b" style="left:988px;top:138px;width:135px;height:20px;background:#fff;border:1px solid #7f9dc9;"></div>
<div class="t tb" style="left:990.8px;top:148px;transform:translateY(-50%) scaleX(0.9961);transform-origin:0 50%;">Neue Rechnungsleg</div>
<div class="b" style="left:1105px;top:139px;width:17px;height:18px;background:#e6e6e6;border:1px solid #adadad;"></div>
<svg class="b" style="left:1109px;top:145px;" width="9" height="6" viewBox="0 0 9 6"><path d="M1 1 L4.5 4.5 L8 1" stroke="#444" stroke-width="1.1" fill="none"/></svg>
<div class="t tb" style="left:1130.5px;top:148px;">...</div>
<svg class="b" style="left:86px;top:165px;" width="160" height="22" viewBox="0 0 160 22"><path d="M1.5 21.5 C12 20 12 1.5 24 1.5 H102 Q104.5 1.5 104.5 4 V21.5" fill="#e4eefc" stroke="#8f959e" stroke-width="1"/>
<path d="M104.5 21.5 V4.5 Q104.5 2.5 106.5 2.5 H151 Q153.5 2.5 153.5 5 V21.5" fill="#d6e5fa" stroke="#8f959e" stroke-width="1"/></svg>
<div class="t f12 ctr" style="left:149.6px;top:174.5px;transform:translate(-50%,-50%) scaleX(1.0098);">Hierarchisch</div>
<div class="t f12 ctr" style="left:217.5px;top:174.5px;transform:translate(-50%,-50%) scaleX(1.0398);">Flach</div>
<div class="b" style="left:87px;top:185px;width:356px;height:810px;background:#fff;border:1px solid #6b6963;border-left:2px solid #5f5d58;"></div>
<div class="b" style="left:89px;top:187px;width:353px;height:781px;overflow:hidden;"><svg class="b" style="left:0;top:0" width="353" height="800"><g stroke="#9da1a9" stroke-width="1" stroke-dasharray="1 1" fill="none"><path d="M27.5 13.0 L27.5 14.3"/><path d="M15.0 7.5 L22.0 7.5"/><path d="M27.5 14.3 L27.5 21.5"/><path d="M27.5 21.5 L27.5 28.8"/><path d="M44.5 27.5 L44.5 28.8"/><path d="M32.0 22.5 L39.0 22.5"/><path d="M27.5 28.8 L27.5 43.3"/><path d="M44.5 28.8 L44.5 36.1"/><path d="M44.5 36.1 L44.5 43.3"/><path d="M49.0 36.5 L56.0 36.5"/><path d="M27.5 43.3 L27.5 57.9"/><path d="M44.5 43.3 L44.5 50.6"/><path d="M49.0 51.5 L56.0 51.5"/><path d="M27.5 57.9 L27.5 65.1"/><path d="M27.5 65.1 L27.5 72.4"/><path d="M44.5 71.1 L44.5 72.4"/><path d="M32.0 65.5 L39.0 65.5"/><path d="M27.5 72.4 L27.5 86.9"/><path d="M44.5 72.4 L44.5 79.6"/><path d="M44.5 79.6 L44.5 86.9"/><path d="M49.0 80.5 L56.0 80.5"/><path d="M27.5 86.9 L27.5 101.4"/><path d="M44.5 86.9 L44.5 94.2"/><path d="M49.0 94.5 L56.0 94.5"/><path d="M27.5 101.4 L27.5 108.7"/><path d="M27.5 108.7 L27.5 116.0"/><path d="M44.5 114.7 L44.5 116.0"/><path d="M32.0 109.5 L39.0 109.5"/><path d="M27.5 116.0 L27.5 130.5"/><path d="M44.5 116.0 L44.5 123.2"/><path d="M49.0 123.5 L56.0 123.5"/><path d="M27.5 130.5 L27.5 137.8"/><path d="M27.5 137.8 L27.5 145.0"/><path d="M44.5 143.8 L44.5 145.0"/><path d="M32.0 138.5 L39.0 138.5"/><path d="M27.5 145.0 L27.5 159.6"/><path d="M44.5 145.0 L44.5 152.3"/><path d="M44.5 152.3 L44.5 159.6"/><path d="M61.5 158.3 L61.5 159.6"/><path d="M49.0 152.5 L56.0 152.5"/><path d="M27.5 159.6 L27.5 174.1"/><path d="M44.5 159.6 L44.5 174.1"/><path d="M61.5 159.6 L61.5 166.8"/><path d="M61.5 166.8 L61.5 174.1"/><path d="M78.5 172.8 L78.5 174.1"/><path d="M66.0 167.5 L73.0 167.5"/><path d="M27.5 174.1 L27.5 188.6"/><path d="M44.5 174.1 L44.5 188.6"/><path d="M61.5 174.1 L61.5 188.6"/><path d="M78.5 174.1 L78.5 181.4"/><path d="M78.5 181.4 L78.5 188.6"/><path d="M95.5 187.4 L95.5 188.6"/><path d="M83.0 181.5 L90.0 181.5"/><path d="M27.5 188.6 L27.5 203.2"/><path d="M44.5 188.6 L44.5 203.2"/><path d="M61.5 188.6 L61.5 203.2"/><path d="M78.5 188.6 L78.5 203.2"/><path d="M95.5 188.6 L95.5 195.9"/><path d="M95.5 195.9 L95.5 203.2"/><path d="M100.0 196.5 L107.0 196.5"/><path d="M27.5 203.2 L27.5 217.7"/><path d="M44.5 203.2 L44.5 217.7"/><path d="M61.5 203.2 L61.5 217.7"/><path d="M78.5 203.2 L78.5 217.7"/><path d="M95.5 203.2 L95.5 210.4"/><path d="M95.5 210.4 L95.5 217.7"/><path d="M100.0 210.5 L107.0 210.5"/><path d="M27.5 217.7 L27.5 232.2"/><path d="M44.5 217.7 L44.5 232.2"/><path d="M61.5 217.7 L61.5 232.2"/><path d="M78.5 217.7 L78.5 232.2"/><path d="M95.5 217.7 L95.5 224.9"/><path d="M95.5 224.9 L95.5 232.2"/><path d="M100.0 225.5 L107.0 225.5"/><path d="M27.5 232.2 L27.5 246.7"/><path d="M44.5 232.2 L44.5 246.7"/><path d="M61.5 232.2 L61.5 246.7"/><path d="M78.5 232.2 L78.5 246.7"/><path d="M95.5 232.2 L95.5 239.5"/><path d="M95.5 239.5 L95.5 246.7"/><path d="M100.0 239.5 L107.0 239.5"/><path d="M27.5 246.7 L27.5 261.3"/><path d="M44.5 246.7 L44.5 261.3"/><path d="M61.5 246.7 L61.5 261.3"/><path d="M78.5 246.7 L78.5 261.3"/><path d="M95.5 246.7 L95.5 254.0"/><path d="M95.5 254.0 L95.5 261.3"/><path d="M100.0 254.5 L107.0 254.5"/><path d="M27.5 261.3 L27.5 275.8"/><path d="M44.5 261.3 L44.5 275.8"/><path d="M61.5 261.3 L61.5 275.8"/><path d="M78.5 261.3 L78.5 275.8"/><path d="M95.5 261.3 L95.5 268.5"/><path d="M95.5 268.5 L95.5 275.8"/><path d="M100.0 269.5 L107.0 269.5"/><path d="M27.5 275.8 L27.5 290.3"/><path d="M44.5 275.8 L44.5 290.3"/><path d="M61.5 275.8 L61.5 290.3"/><path d="M78.5 275.8 L78.5 290.3"/><path d="M95.5 275.8 L95.5 283.1"/><path d="M95.5 283.1 L95.5 290.3"/><path d="M100.0 283.5 L107.0 283.5"/><path d="M27.5 290.3 L27.5 304.9"/><path d="M44.5 290.3 L44.5 304.9"/><path d="M61.5 290.3 L61.5 304.9"/><path d="M78.5 290.3 L78.5 304.9"/><path d="M95.5 290.3 L95.5 297.6"/><path d="M100.0 298.5 L107.0 298.5"/><path d="M27.5 304.9 L27.5 319.4"/><path d="M44.5 304.9 L44.5 319.4"/><path d="M61.5 304.9 L61.5 319.4"/><path d="M78.5 304.9 L78.5 312.1"/><path d="M83.0 312.5 L90.0 312.5"/><path d="M27.5 319.4 L27.5 333.9"/><path d="M44.5 319.4 L44.5 333.9"/><path d="M61.5 319.4 L61.5 326.7"/><path d="M61.5 326.7 L61.5 333.9"/><path d="M78.5 332.7 L78.5 333.9"/><path d="M66.0 327.5 L73.0 327.5"/><path d="M27.5 333.9 L27.5 348.5"/><path d="M44.5 333.9 L44.5 348.5"/><path d="M61.5 333.9 L61.5 348.5"/><path d="M78.5 333.9 L78.5 341.2"/><path d="M78.5 341.2 L78.5 348.5"/><path d="M83.0 341.5 L90.0 341.5"/><path d="M27.5 348.5 L27.5 363.0"/><path d="M44.5 348.5 L44.5 363.0"/><path d="M61.5 348.5 L61.5 363.0"/><path d="M78.5 348.5 L78.5 355.7"/><path d="M78.5 355.7 L78.5 363.0"/><path d="M83.0 356.5 L90.0 356.5"/><path d="M27.5 363.0 L27.5 377.5"/><path d="M44.5 363.0 L44.5 377.5"/><path d="M61.5 363.0 L61.5 377.5"/><path d="M78.5 363.0 L78.5 370.2"/><path d="M78.5 370.2 L78.5 377.5"/><path d="M83.0 370.5 L90.0 370.5"/><path d="M27.5 377.5 L27.5 392.0"/><path d="M44.5 377.5 L44.5 392.0"/><path d="M61.5 377.5 L61.5 392.0"/><path d="M78.5 377.5 L78.5 384.8"/><path d="M78.5 384.8 L78.5 392.0"/><path d="M83.0 385.5 L90.0 385.5"/><path d="M27.5 392.0 L27.5 406.6"/><path d="M44.5 392.0 L44.5 406.6"/><path d="M61.5 392.0 L61.5 406.6"/><path d="M78.5 392.0 L78.5 399.3"/><path d="M78.5 399.3 L78.5 406.6"/><path d="M83.0 399.5 L90.0 399.5"/><path d="M27.5 406.6 L27.5 421.1"/><path d="M44.5 406.6 L44.5 421.1"/><path d="M61.5 406.6 L61.5 421.1"/><path d="M78.5 406.6 L78.5 413.8"/><path d="M78.5 413.8 L78.5 421.1"/><path d="M83.0 414.5 L90.0 414.5"/><path d="M27.5 421.1 L27.5 435.6"/><path d="M44.5 421.1 L44.5 435.6"/><path d="M61.5 421.1 L61.5 435.6"/><path d="M78.5 421.1 L78.5 428.4"/><path d="M78.5 428.4 L78.5 435.6"/><path d="M83.0 428.5 L90.0 428.5"/><path d="M27.5 435.6 L27.5 450.2"/><path d="M44.5 435.6 L44.5 450.2"/><path d="M61.5 435.6 L61.5 450.2"/><path d="M78.5 435.6 L78.5 442.9"/><path d="M78.5 442.9 L78.5 450.2"/><path d="M83.0 443.5 L90.0 443.5"/><path d="M27.5 450.2 L27.5 464.7"/><path d="M44.5 450.2 L44.5 464.7"/><path d="M61.5 450.2 L61.5 464.7"/><path d="M78.5 450.2 L78.5 457.4"/><path d="M83.0 457.5 L90.0 457.5"/><path d="M27.5 464.7 L27.5 479.2"/><path d="M44.5 464.7 L44.5 479.2"/><path d="M61.5 464.7 L61.5 472.0"/><path d="M61.5 472.0 L61.5 479.2"/><path d="M78.5 478.0 L78.5 479.2"/><path d="M66.0 472.5 L73.0 472.5"/><path d="M27.5 479.2 L27.5 493.8"/><path d="M44.5 479.2 L44.5 493.8"/><path d="M61.5 479.2 L61.5 493.8"/><path d="M78.5 479.2 L78.5 486.5"/><path d="M78.5 486.5 L78.5 493.8"/><path d="M83.0 486.5 L90.0 486.5"/><path d="M27.5 493.8 L27.5 508.3"/><path d="M44.5 493.8 L44.5 508.3"/><path d="M61.5 493.8 L61.5 508.3"/><path d="M78.5 493.8 L78.5 501.0"/><path d="M78.5 501.0 L78.5 508.3"/><path d="M83.0 501.5 L90.0 501.5"/><path d="M27.5 508.3 L27.5 522.8"/><path d="M44.5 508.3 L44.5 522.8"/><path d="M61.5 508.3 L61.5 522.8"/><path d="M78.5 508.3 L78.5 515.5"/><path d="M78.5 515.5 L78.5 522.8"/><path d="M83.0 516.5 L90.0 516.5"/><path d="M27.5 522.8 L27.5 537.3"/><path d="M44.5 522.8 L44.5 537.3"/><path d="M61.5 522.8 L61.5 537.3"/><path d="M78.5 522.8 L78.5 530.1"/><path d="M78.5 530.1 L78.5 537.3"/><path d="M83.0 530.5 L90.0 530.5"/><path d="M27.5 537.3 L27.5 551.9"/><path d="M44.5 537.3 L44.5 551.9"/><path d="M61.5 537.3 L61.5 551.9"/><path d="M78.5 537.3 L78.5 544.6"/><path d="M78.5 544.6 L78.5 551.9"/><path d="M78.0 545.5 L90.0 545.5"/><path d="M27.5 551.9 L27.5 566.4"/><path d="M44.5 551.9 L44.5 566.4"/><path d="M61.5 551.9 L61.5 566.4"/><path d="M78.5 551.9 L78.5 559.1"/><path d="M78.5 559.1 L78.5 566.4"/><path d="M83.0 559.5 L90.0 559.5"/><path d="M27.5 566.4 L27.5 580.9"/><path d="M44.5 566.4 L44.5 580.9"/><path d="M61.5 566.4 L61.5 580.9"/><path d="M78.5 566.4 L78.5 573.7"/><path d="M78.5 573.7 L78.5 580.9"/><path d="M83.0 574.5 L90.0 574.5"/><path d="M27.5 580.9 L27.5 595.5"/><path d="M44.5 580.9 L44.5 595.5"/><path d="M61.5 580.9 L61.5 595.5"/><path d="M78.5 580.9 L78.5 588.2"/><path d="M78.5 588.2 L78.5 595.5"/><path d="M83.0 588.5 L90.0 588.5"/><path d="M27.5 595.5 L27.5 610.0"/><path d="M44.5 595.5 L44.5 610.0"/><path d="M61.5 595.5 L61.5 610.0"/><path d="M78.5 595.5 L78.5 602.7"/><path d="M78.5 602.7 L78.5 610.0"/><path d="M83.0 603.5 L90.0 603.5"/><path d="M27.5 610.0 L27.5 624.5"/><path d="M44.5 610.0 L44.5 624.5"/><path d="M61.5 610.0 L61.5 624.5"/><path d="M78.5 610.0 L78.5 617.3"/><path d="M83.0 617.5 L90.0 617.5"/><path d="M27.5 624.5 L27.5 639.1"/><path d="M44.5 624.5 L44.5 639.1"/><path d="M61.5 624.5 L61.5 631.8"/><path d="M61.5 631.8 L61.5 639.1"/><path d="M78.5 637.8 L78.5 639.1"/><path d="M66.0 632.5 L73.0 632.5"/><path d="M27.5 639.1 L27.5 653.6"/><path d="M44.5 639.1 L44.5 653.6"/><path d="M61.5 639.1 L61.5 653.6"/><path d="M78.5 639.1 L78.5 646.3"/><path d="M83.0 646.5 L90.0 646.5"/><path d="M27.5 653.6 L27.5 668.1"/><path d="M44.5 653.6 L44.5 668.1"/><path d="M61.5 653.6 L61.5 660.9"/><path d="M66.0 661.5 L73.0 661.5"/><path d="M27.5 668.1 L27.5 682.6"/><path d="M44.5 668.1 L44.5 675.4"/><path d="M49.0 675.5 L56.0 675.5"/><path d="M27.5 682.6 L27.5 689.9"/><path d="M27.5 689.9 L27.5 697.2"/><path d="M27.0 690.5 L39.0 690.5"/><path d="M27.5 697.2 L27.5 704.4"/><path d="M44.5 710.4 L44.5 711.7"/><path d="M32.0 704.5 L39.0 704.5"/><path d="M44.5 711.7 L44.5 719.0"/><path d="M49.0 719.5 L56.0 719.5"/></g></svg><svg class="b" style="left:6px;top:3px;" width="9" height="9" viewBox="0 0 9 9"><rect x=".5" y=".5" width="8" height="8" rx="1" fill="#fdfdfd" stroke="#a4a8b0"/><rect x="1.5" y="4.5" width="6" height="3" fill="#e4e7ec"/><path d="M2.5 4.5 H6.5" stroke="#2b3f9b" stroke-width="1"/></svg><svg class="b" style="left:22.200000000000003px;top:-1px;" width="16" height="15" viewBox="0 0 16 15"><path d="M6 4 L13.5 3 L14.5 4.5 V12.5 L7 14.5 Z" fill="#7a7ec8" stroke="#5a5fb5" stroke-width=".6"/>
<path d="M1 1.2 Q3.5 .8 5.5 3.5 L6 14 Q4 11.5 1.6 11.2 Z" fill="#fff" stroke="#4d52ad" stroke-width="1"/>
<path d="M5.5 3.5 Q7.5 .8 11 1.2 L11.4 11 Q8 11.2 6 14 Z" fill="#eef0f8" stroke="#4d52ad" stroke-width="1"/><path d="M2.8 2.5 Q3.8 3 4.4 4.2 L4.8 11.2" stroke="#c9cbe6" stroke-width=".8" fill="none"/></svg><div class="b" style="left:37.5px;top:0px;width:133px;height:15px;background:#b3c3da;outline:1px dotted #4b566b;outline-offset:-1px;"></div><div class="t tr" style="left:40px;top:7.5px;color:#fff;transform:translateY(-50%) scaleX(0.8906);transform-origin:0 50%;">Neue Rechnungslegung</div><svg class="b" style="left:23px;top:17px;" width="9" height="9" viewBox="0 0 9 9"><rect x=".5" y=".5" width="8" height="8" rx="1" fill="#fdfdfd" stroke="#a4a8b0"/><rect x="1.5" y="4.5" width="6" height="3" fill="#e4e7ec"/><path d="M2.5 4.5 H6.5" stroke="#2b3f9b" stroke-width="1"/></svg><svg class="b" style="left:39.19999999999999px;top:14px;" width="16" height="15" viewBox="0 0 16 15"><path d="M6 4 L13.5 3 L14.5 4.5 V12.5 L7 14.5 Z" fill="#7a7ec8" stroke="#5a5fb5" stroke-width=".6"/>
<path d="M1 1.2 Q3.5 .8 5.5 3.5 L6 14 Q4 11.5 1.6 11.2 Z" fill="#fff" stroke="#4d52ad" stroke-width="1"/>
<path d="M5.5 3.5 Q7.5 .8 11 1.2 L11.4 11 Q8 11.2 6 14 Z" fill="#eef0f8" stroke="#4d52ad" stroke-width="1"/><path d="M2.8 2.5 Q3.8 3 4.4 4.2 L4.8 11.2" stroke="#c9cbe6" stroke-width=".8" fill="none"/></svg><div class="t tr" style="left:57px;top:22.03px;transform:translateY(-50%) scaleX(0.9410);transform-origin:0 50%;">A - Aktiven</div><svg class="b" style="left:40px;top:32px;" width="9" height="9" viewBox="0 0 9 9"><rect x=".5" y=".5" width="8" height="8" rx="1" fill="#fdfdfd" stroke="#a4a8b0"/><rect x="1.5" y="4.5" width="6" height="3" fill="#e4e7ec"/><path d="M2.5 4.5 H6.5" stroke="#2b3f9b" stroke-width="1"/><path d="M4.5 2.5 V6.5" stroke="#2b3f9b" stroke-width="1"/></svg><svg class="b" style="left:57px;top:30px;" width="13" height="13" viewBox="0 0 13 13"><rect x="0.5" y="0.5" width="12" height="12" fill="#3a4199"/><rect x="0.5" y="0" width="10.8" height="11" fill="url(#bk)"/><path d="M11.8 .5 V12" stroke="#f2f3fb" stroke-width=".9"/><path d="M1.5 11.5 H12" stroke="#dfe1f4" stroke-width=".9"/></svg><div class="t tr" style="left:74px;top:36.56px;transform:translateY(-50%) scaleX(0.9058);transform-origin:0 50%;">11 - Umlaufsvermögen</div><svg class="b" style="left:40px;top:46px;" width="9" height="9" viewBox="0 0 9 9"><rect x=".5" y=".5" width="8" height="8" rx="1" fill="#fdfdfd" stroke="#a4a8b0"/><rect x="1.5" y="4.5" width="6" height="3" fill="#e4e7ec"/><path d="M2.5 4.5 H6.5" stroke="#2b3f9b" stroke-width="1"/><path d="M4.5 2.5 V6.5" stroke="#2b3f9b" stroke-width="1"/></svg><svg class="b" style="left:57px;top:44px;" width="13" height="13" viewBox="0 0 13 13"><rect x="0.5" y="0.5" width="12" height="12" fill="#3a4199"/><rect x="0.5" y="0" width="10.8" height="11" fill="url(#bk)"/><path d="M11.8 .5 V12" stroke="#f2f3fb" stroke-width=".9"/><path d="M1.5 11.5 H12" stroke="#dfe1f4" stroke-width=".9"/></svg><div class="t tr" style="left:74px;top:51.09px;transform:translateY(-50%) scaleX(0.8961);transform-origin:0 50%;">12 - Anlagenvermögen</div><svg class="b" style="left:23px;top:61px;" width="9" height="9" viewBox="0 0 9 9"><rect x=".5" y=".5" width="8" height="8" rx="1" fill="#fdfdfd" stroke="#a4a8b0"/><rect x="1.5" y="4.5" width="6" height="3" fill="#e4e7ec"/><path d="M2.5 4.5 H6.5" stroke="#2b3f9b" stroke-width="1"/></svg><svg class="b" style="left:39.19999999999999px;top:58px;" width="16" height="15" viewBox="0 0 16 15"><path d="M6 4 L13.5 3 L14.5 4.5 V12.5 L7 14.5 Z" fill="#7a7ec8" stroke="#5a5fb5" stroke-width=".6"/>
<path d="M1 1.2 Q3.5 .8 5.5 3.5 L6 14 Q4 11.5 1.6 11.2 Z" fill="#fff" stroke="#4d52ad" stroke-width="1"/>
<path d="M5.5 3.5 Q7.5 .8 11 1.2 L11.4 11 Q8 11.2 6 14 Z" fill="#eef0f8" stroke="#4d52ad" stroke-width="1"/><path d="M2.8 2.5 Q3.8 3 4.4 4.2 L4.8 11.2" stroke="#c9cbe6" stroke-width=".8" fill="none"/></svg><div class="t tr" style="left:57px;top:65.62px;transform:translateY(-50%) scaleX(0.9161);transform-origin:0 50%;">P - Passiven</div><svg class="b" style="left:40px;top:75px;" width="9" height="9" viewBox="0 0 9 9"><rect x=".5" y=".5" width="8" height="8" rx="1" fill="#fdfdfd" stroke="#a4a8b0"/><rect x="1.5" y="4.5" width="6" height="3" fill="#e4e7ec"/><path d="M2.5 4.5 H6.5" stroke="#2b3f9b" stroke-width="1"/><path d="M4.5 2.5 V6.5" stroke="#2b3f9b" stroke-width="1"/></svg><svg class="b" style="left:57px;top:73px;" width="13" height="13" viewBox="0 0 13 13"><rect x="0.5" y="0.5" width="12" height="12" fill="#3a4199"/><rect x="0.5" y="0" width="10.8" height="11" fill="url(#bk)"/><path d="M11.8 .5 V12" stroke="#f2f3fb" stroke-width=".9"/><path d="M1.5 11.5 H12" stroke="#dfe1f4" stroke-width=".9"/></svg><div class="t tr" style="left:74px;top:80.14999999999998px;transform:translateY(-50%) scaleX(0.8998);transform-origin:0 50%;">20 - Fremdkapital</div><svg class="b" style="left:40px;top:90px;" width="9" height="9" viewBox="0 0 9 9"><rect x=".5" y=".5" width="8" height="8" rx="1" fill="#fdfdfd" stroke="#a4a8b0"/><rect x="1.5" y="4.5" width="6" height="3" fill="#e4e7ec"/><path d="M2.5 4.5 H6.5" stroke="#2b3f9b" stroke-width="1"/><path d="M4.5 2.5 V6.5" stroke="#2b3f9b" stroke-width="1"/></svg><svg class="b" style="left:57px;top:88px;" width="13" height="13" viewBox="0 0 13 13"><rect x="0.5" y="0.5" width="12" height="12" fill="#3a4199"/><rect x="0.5" y="0" width="10.8" height="11" fill="url(#bk)"/><path d="M11.8 .5 V12" stroke="#f2f3fb" stroke-width=".9"/><path d="M1.5 11.5 H12" stroke="#dfe1f4" stroke-width=".9"/></svg><div class="t tr" style="left:74px;top:94.68px;transform:translateY(-50%) scaleX(0.9124);transform-origin:0 50%;">24 - Eigenkapital / Organisationskapital</div><svg class="b" style="left:23px;top:104px;" width="9" height="9" viewBox="0 0 9 9"><rect x=".5" y=".5" width="8" height="8" rx="1" fill="#fdfdfd" stroke="#a4a8b0"/><rect x="1.5" y="4.5" width="6" height="3" fill="#e4e7ec"/><path d="M2.5 4.5 H6.5" stroke="#2b3f9b" stroke-width="1"/></svg><svg class="b" style="left:39.19999999999999px;top:101px;" width="16" height="15" viewBox="0 0 16 15"><path d="M6 4 L13.5 3 L14.5 4.5 V12.5 L7 14.5 Z" fill="#7a7ec8" stroke="#5a5fb5" stroke-width=".6"/>
<path d="M1 1.2 Q3.5 .8 5.5 3.5 L6 14 Q4 11.5 1.6 11.2 Z" fill="#fff" stroke="#4d52ad" stroke-width="1"/>
<path d="M5.5 3.5 Q7.5 .8 11 1.2 L11.4 11 Q8 11.2 6 14 Z" fill="#eef0f8" stroke="#4d52ad" stroke-width="1"/><path d="M2.8 2.5 Q3.8 3 4.4 4.2 L4.8 11.2" stroke="#c9cbe6" stroke-width=".8" fill="none"/></svg><div class="t tr" style="left:57px;top:109.20999999999998px;transform:translateY(-50%) scaleX(0.9299);transform-origin:0 50%;">S - Abschluss</div><svg class="b" style="left:40px;top:119px;" width="9" height="9" viewBox="0 0 9 9"><rect x=".5" y=".5" width="8" height="8" rx="1" fill="#fdfdfd" stroke="#a4a8b0"/><rect x="1.5" y="4.5" width="6" height="3" fill="#e4e7ec"/><path d="M2.5 4.5 H6.5" stroke="#2b3f9b" stroke-width="1"/><path d="M4.5 2.5 V6.5" stroke="#2b3f9b" stroke-width="1"/></svg><svg class="b" style="left:57px;top:117px;" width="13" height="13" viewBox="0 0 13 13"><rect x="0.5" y="0.5" width="12" height="12" fill="#3a4199"/><rect x="0.5" y="0" width="10.8" height="11" fill="url(#bk)"/><path d="M11.8 .5 V12" stroke="#f2f3fb" stroke-width=".9"/><path d="M1.5 11.5 H12" stroke="#dfe1f4" stroke-width=".9"/></svg><div class="t tr" style="left:74px;top:123.74000000000001px;transform:translateY(-50%) scaleX(0.9013);transform-origin:0 50%;">80 - Bilanz</div><svg class="b" style="left:23px;top:133px;" width="9" height="9" viewBox="0 0 9 9"><rect x=".5" y=".5" width="8" height="8" rx="1" fill="#fdfdfd" stroke="#a4a8b0"/><rect x="1.5" y="4.5" width="6" height="3" fill="#e4e7ec"/><path d="M2.5 4.5 H6.5" stroke="#2b3f9b" stroke-width="1"/></svg><svg class="b" style="left:39.19999999999999px;top:130px;" width="16" height="15" viewBox="0 0 16 15"><path d="M6 4 L13.5 3 L14.5 4.5 V12.5 L7 14.5 Z" fill="#7a7ec8" stroke="#5a5fb5" stroke-width=".6"/>
<path d="M1 1.2 Q3.5 .8 5.5 3.5 L6 14 Q4 11.5 1.6 11.2 Z" fill="#fff" stroke="#4d52ad" stroke-width="1"/>
<path d="M5.5 3.5 Q7.5 .8 11 1.2 L11.4 11 Q8 11.2 6 14 Z" fill="#eef0f8" stroke="#4d52ad" stroke-width="1"/><path d="M2.8 2.5 Q3.8 3 4.4 4.2 L4.8 11.2" stroke="#c9cbe6" stroke-width=".8" fill="none"/></svg><div class="t tr" style="left:57px;top:138.26999999999998px;transform:translateY(-50%) scaleX(0.9059);transform-origin:0 50%;">1.-8. - Betriebsergebnis</div><svg class="b" style="left:40px;top:148px;" width="9" height="9" viewBox="0 0 9 9"><rect x=".5" y=".5" width="8" height="8" rx="1" fill="#fdfdfd" stroke="#a4a8b0"/><rect x="1.5" y="4.5" width="6" height="3" fill="#e4e7ec"/><path d="M2.5 4.5 H6.5" stroke="#2b3f9b" stroke-width="1"/></svg><svg class="b" style="left:56.19999999999999px;top:145px;" width="16" height="15" viewBox="0 0 16 15"><path d="M6 4 L13.5 3 L14.5 4.5 V12.5 L7 14.5 Z" fill="#7a7ec8" stroke="#5a5fb5" stroke-width=".6"/>
<path d="M1 1.2 Q3.5 .8 5.5 3.5 L6 14 Q4 11.5 1.6 11.2 Z" fill="#fff" stroke="#4d52ad" stroke-width="1"/>
<path d="M5.5 3.5 Q7.5 .8 11 1.2 L11.4 11 Q8 11.2 6 14 Z" fill="#eef0f8" stroke="#4d52ad" stroke-width="1"/><path d="M2.8 2.5 Q3.8 3 4.4 4.2 L4.8 11.2" stroke="#c9cbe6" stroke-width=".8" fill="none"/></svg><div class="t tr" style="left:74px;top:152.79999999999995px;transform:translateY(-50%) scaleX(0.9067);transform-origin:0 50%;">1.-7. - Ordentliches Ergebnis</div><svg class="b" style="left:57px;top:162px;" width="9" height="9" viewBox="0 0 9 9"><rect x=".5" y=".5" width="8" height="8" rx="1" fill="#fdfdfd" stroke="#a4a8b0"/><rect x="1.5" y="4.5" width="6" height="3" fill="#e4e7ec"/><path d="M2.5 4.5 H6.5" stroke="#2b3f9b" stroke-width="1"/></svg><svg class="b" style="left:73.19999999999999px;top:159px;" width="16" height="15" viewBox="0 0 16 15"><path d="M6 4 L13.5 3 L14.5 4.5 V12.5 L7 14.5 Z" fill="#7a7ec8" stroke="#5a5fb5" stroke-width=".6"/>
<path d="M1 1.2 Q3.5 .8 5.5 3.5 L6 14 Q4 11.5 1.6 11.2 Z" fill="#fff" stroke="#4d52ad" stroke-width="1"/>
<path d="M5.5 3.5 Q7.5 .8 11 1.2 L11.4 11 Q8 11.2 6 14 Z" fill="#eef0f8" stroke="#4d52ad" stroke-width="1"/><path d="M2.8 2.5 Q3.8 3 4.4 4.2 L4.8 11.2" stroke="#c9cbe6" stroke-width=".8" fill="none"/></svg><div class="t tr" style="left:91px;top:167.32999999999998px;transform:translateY(-50%) scaleX(0.9044);transform-origin:0 50%;">1 - Nettoerlöse aus Lieferungen und Leistungen</div><svg class="b" style="left:74px;top:177px;" width="9" height="9" viewBox="0 0 9 9"><rect x=".5" y=".5" width="8" height="8" rx="1" fill="#fdfdfd" stroke="#a4a8b0"/><rect x="1.5" y="4.5" width="6" height="3" fill="#e4e7ec"/><path d="M2.5 4.5 H6.5" stroke="#2b3f9b" stroke-width="1"/></svg><svg class="b" style="left:90.19999999999999px;top:174px;" width="16" height="15" viewBox="0 0 16 15"><path d="M6 4 L13.5 3 L14.5 4.5 V12.5 L7 14.5 Z" fill="#7a7ec8" stroke="#5a5fb5" stroke-width=".6"/>
<path d="M1 1.2 Q3.5 .8 5.5 3.5 L6 14 Q4 11.5 1.6 11.2 Z" fill="#fff" stroke="#4d52ad" stroke-width="1"/>
<path d="M5.5 3.5 Q7.5 .8 11 1.2 L11.4 11 Q8 11.2 6 14 Z" fill="#eef0f8" stroke="#4d52ad" stroke-width="1"/><path d="M2.8 2.5 Q3.8 3 4.4 4.2 L4.8 11.2" stroke="#c9cbe6" stroke-width=".8" fill="none"/></svg><div class="t tr" style="left:108px;top:181.86px;transform:translateY(-50%) scaleX(0.9083);transform-origin:0 50%;">1.1 - Betriebsertrag</div><svg class="b" style="left:91px;top:191px;" width="9" height="9" viewBox="0 0 9 9"><rect x=".5" y=".5" width="8" height="8" rx="1" fill="#fdfdfd" stroke="#a4a8b0"/><rect x="1.5" y="4.5" width="6" height="3" fill="#e4e7ec"/><path d="M2.5 4.5 H6.5" stroke="#2b3f9b" stroke-width="1"/><path d="M4.5 2.5 V6.5" stroke="#2b3f9b" stroke-width="1"/></svg><svg class="b" style="left:108px;top:189px;" width="13" height="13" viewBox="0 0 13 13"><rect x="0.5" y="0.5" width="12" height="12" fill="#3a4199"/><rect x="0.5" y="0" width="10.8" height="11" fill="url(#bk)"/><path d="M11.8 .5 V12" stroke="#f2f3fb" stroke-width=".9"/><path d="M1.5 11.5 H12" stroke="#dfe1f4" stroke-width=".9"/></svg><div class="t tr" style="left:125px;top:196.39px;transform:translateY(-50%) scaleX(0.9133);transform-origin:0 50%;">60 - Pensions- und Pflegetaxen, Mieten Alte</div><svg class="b" style="left:91px;top:206px;" width="9" height="9" viewBox="0 0 9 9"><rect x=".5" y=".5" width="8" height="8" rx="1" fill="#fdfdfd" stroke="#a4a8b0"/><rect x="1.5" y="4.5" width="6" height="3" fill="#e4e7ec"/><path d="M2.5 4.5 H6.5" stroke="#2b3f9b" stroke-width="1"/><path d="M4.5 2.5 V6.5" stroke="#2b3f9b" stroke-width="1"/></svg><svg class="b" style="left:108px;top:204px;" width="13" height="13" viewBox="0 0 13 13"><rect x="0.5" y="0.5" width="12" height="12" fill="#3a4199"/><rect x="0.5" y="0" width="10.8" height="11" fill="url(#bk)"/><path d="M11.8 .5 V12" stroke="#f2f3fb" stroke-width=".9"/><path d="M1.5 11.5 H12" stroke="#dfe1f4" stroke-width=".9"/></svg><div class="t tr" style="left:125px;top:210.91999999999996px;transform:translateY(-50%) scaleX(0.9061);transform-origin:0 50%;">61 - Arzthonorare</div><svg class="b" style="left:91px;top:220px;" width="9" height="9" viewBox="0 0 9 9"><rect x=".5" y=".5" width="8" height="8" rx="1" fill="#fdfdfd" stroke="#a4a8b0"/><rect x="1.5" y="4.5" width="6" height="3" fill="#e4e7ec"/><path d="M2.5 4.5 H6.5" stroke="#2b3f9b" stroke-width="1"/><path d="M4.5 2.5 V6.5" stroke="#2b3f9b" stroke-width="1"/></svg><svg class="b" style="left:108px;top:218px;" width="13" height="13" viewBox="0 0 13 13"><rect x="0.5" y="0.5" width="12" height="12" fill="#3a4199"/><rect x="0.5" y="0" width="10.8" height="11" fill="url(#bk)"/><path d="M11.8 .5 V12" stroke="#f2f3fb" stroke-width=".9"/><path d="M1.5 11.5 H12" stroke="#dfe1f4" stroke-width=".9"/></svg><div class="t tr" style="left:125px;top:225.45px;transform:translateY(-50%) scaleX(0.9133);transform-origin:0 50%;">62 - Medizinische Leistungen KVG</div><svg class="b" style="left:91px;top:235px;" width="9" height="9" viewBox="0 0 9 9"><rect x=".5" y=".5" width="8" height="8" rx="1" fill="#fdfdfd" stroke="#a4a8b0"/><rect x="1.5" y="4.5" width="6" height="3" fill="#e4e7ec"/><path d="M2.5 4.5 H6.5" stroke="#2b3f9b" stroke-width="1"/><path d="M4.5 2.5 V6.5" stroke="#2b3f9b" stroke-width="1"/></svg><svg class="b" style="left:108px;top:233px;" width="13" height="13" viewBox="0 0 13 13"><rect x="0.5" y="0.5" width="12" height="12" fill="#3a4199"/><rect x="0.5" y="0" width="10.8" height="11" fill="url(#bk)"/><path d="M11.8 .5 V12" stroke="#f2f3fb" stroke-width=".9"/><path d="M1.5 11.5 H12" stroke="#dfe1f4" stroke-width=".9"/></svg><div class="t tr" style="left:125px;top:239.98000000000002px;transform:translateY(-50%) scaleX(0.9067);transform-origin:0 50%;">63 - Übrige medizinische Nebenleistungen</div><svg class="b" style="left:91px;top:250px;" width="9" height="9" viewBox="0 0 9 9"><rect x=".5" y=".5" width="8" height="8" rx="1" fill="#fdfdfd" stroke="#a4a8b0"/><rect x="1.5" y="4.5" width="6" height="3" fill="#e4e7ec"/><path d="M2.5 4.5 H6.5" stroke="#2b3f9b" stroke-width="1"/><path d="M4.5 2.5 V6.5" stroke="#2b3f9b" stroke-width="1"/></svg><svg class="b" style="left:108px;top:248px;" width="13" height="13" viewBox="0 0 13 13"><rect x="0.5" y="0.5" width="12" height="12" fill="#3a4199"/><rect x="0.5" y="0" width="10.8" height="11" fill="url(#bk)"/><path d="M11.8 .5 V12" stroke="#f2f3fb" stroke-width=".9"/><path d="M1.5 11.5 H12" stroke="#dfe1f4" stroke-width=".9"/></svg><div class="t tr" style="left:125px;top:254.51px;transform:translateY(-50%) scaleX(0.8941);transform-origin:0 50%;">65 - Übrige Leistungen für Bewohner</div><svg class="b" style="left:91px;top:264px;" width="9" height="9" viewBox="0 0 9 9"><rect x=".5" y=".5" width="8" height="8" rx="1" fill="#fdfdfd" stroke="#a4a8b0"/><rect x="1.5" y="4.5" width="6" height="3" fill="#e4e7ec"/><path d="M2.5 4.5 H6.5" stroke="#2b3f9b" stroke-width="1"/><path d="M4.5 2.5 V6.5" stroke="#2b3f9b" stroke-width="1"/></svg><svg class="b" style="left:108px;top:262px;" width="13" height="13" viewBox="0 0 13 13"><rect x="0.5" y="0.5" width="12" height="12" fill="#3a4199"/><rect x="0.5" y="0" width="10.8" height="11" fill="url(#bk)"/><path d="M11.8 .5 V12" stroke="#f2f3fb" stroke-width=".9"/><path d="M1.5 11.5 H12" stroke="#dfe1f4" stroke-width=".9"/></svg><div class="t tr" style="left:125px;top:269.03999999999996px;transform:translateY(-50%) scaleX(0.9065);transform-origin:0 50%;">66 - Miet- und Kapitalzinsen</div><svg class="b" style="left:91px;top:279px;" width="9" height="9" viewBox="0 0 9 9"><rect x=".5" y=".5" width="8" height="8" rx="1" fill="#fdfdfd" stroke="#a4a8b0"/><rect x="1.5" y="4.5" width="6" height="3" fill="#e4e7ec"/><path d="M2.5 4.5 H6.5" stroke="#2b3f9b" stroke-width="1"/><path d="M4.5 2.5 V6.5" stroke="#2b3f9b" stroke-width="1"/></svg><svg class="b" style="left:108px;top:277px;" width="13" height="13" viewBox="0 0 13 13"><rect x="0.5" y="0.5" width="12" height="12" fill="#3a4199"/><rect x="0.5" y="0" width="10.8" height="11" fill="url(#bk)"/><path d="M11.8 .5 V12" stroke="#f2f3fb" stroke-width=".9"/><path d="M1.5 11.5 H12" stroke="#dfe1f4" stroke-width=".9"/></svg><div class="t tr" style="left:125px;top:283.57px;transform:translateY(-50%) scaleX(0.8945);transform-origin:0 50%;">67 - Nebenbetriebe</div><svg class="b" style="left:91px;top:293px;" width="9" height="9" viewBox="0 0 9 9"><rect x=".5" y=".5" width="8" height="8" rx="1" fill="#fdfdfd" stroke="#a4a8b0"/><rect x="1.5" y="4.5" width="6" height="3" fill="#e4e7ec"/><path d="M2.5 4.5 H6.5" stroke="#2b3f9b" stroke-width="1"/><path d="M4.5 2.5 V6.5" stroke="#2b3f9b" stroke-width="1"/></svg><svg class="b" style="left:108px;top:291px;" width="13" height="13" viewBox="0 0 13 13"><rect x="0.5" y="0.5" width="12" height="12" fill="#3a4199"/><rect x="0.5" y="0" width="10.8" height="11" fill="url(#bk)"/><path d="M11.8 .5 V12" stroke="#f2f3fb" stroke-width=".9"/><path d="M1.5 11.5 H12" stroke="#dfe1f4" stroke-width=".9"/></svg><div class="t tr" style="left:125px;top:298.09999999999997px;transform:translateY(-50%) scaleX(0.8991);transform-origin:0 50%;">68 - Leistungen an Personal und Dritte</div><svg class="b" style="left:74px;top:308px;" width="9" height="9" viewBox="0 0 9 9"><rect x=".5" y=".5" width="8" height="8" rx="1" fill="#fdfdfd" stroke="#a4a8b0"/><rect x="1.5" y="4.5" width="6" height="3" fill="#e4e7ec"/><path d="M2.5 4.5 H6.5" stroke="#2b3f9b" stroke-width="1"/><path d="M4.5 2.5 V6.5" stroke="#2b3f9b" stroke-width="1"/></svg><svg class="b" style="left:91px;top:306px;" width="13" height="13" viewBox="0 0 13 13"><rect x="0.5" y="0.5" width="12" height="12" fill="#3a4199"/><rect x="0.5" y="0" width="10.8" height="11" fill="url(#bk)"/><path d="M11.8 .5 V12" stroke="#f2f3fb" stroke-width=".9"/><path d="M1.5 11.5 H12" stroke="#dfe1f4" stroke-width=".9"/></svg><div class="t tr" style="left:108px;top:312.63px;transform:translateY(-50%) scaleX(0.8998);transform-origin:0 50%;">1.2 - Übrige Erlöse</div><svg class="b" style="left:57px;top:322px;" width="9" height="9" viewBox="0 0 9 9"><rect x=".5" y=".5" width="8" height="8" rx="1" fill="#fdfdfd" stroke="#a4a8b0"/><rect x="1.5" y="4.5" width="6" height="3" fill="#e4e7ec"/><path d="M2.5 4.5 H6.5" stroke="#2b3f9b" stroke-width="1"/></svg><svg class="b" style="left:73.19999999999999px;top:319px;" width="16" height="15" viewBox="0 0 16 15"><path d="M6 4 L13.5 3 L14.5 4.5 V12.5 L7 14.5 Z" fill="#7a7ec8" stroke="#5a5fb5" stroke-width=".6"/>
<path d="M1 1.2 Q3.5 .8 5.5 3.5 L6 14 Q4 11.5 1.6 11.2 Z" fill="#fff" stroke="#4d52ad" stroke-width="1"/>
<path d="M5.5 3.5 Q7.5 .8 11 1.2 L11.4 11 Q8 11.2 6 14 Z" fill="#eef0f8" stroke="#4d52ad" stroke-width="1"/><path d="M2.8 2.5 Q3.8 3 4.4 4.2 L4.8 11.2" stroke="#c9cbe6" stroke-width=".8" fill="none"/></svg><div class="t tr" style="left:91px;top:327.15999999999997px;transform:translateY(-50%) scaleX(0.9013);transform-origin:0 50%;">4 - Personalaufwand</div><svg class="b" style="left:74px;top:337px;" width="9" height="9" viewBox="0 0 9 9"><rect x=".5" y=".5" width="8" height="8" rx="1" fill="#fdfdfd" stroke="#a4a8b0"/><rect x="1.5" y="4.5" width="6" height="3" fill="#e4e7ec"/><path d="M2.5 4.5 H6.5" stroke="#2b3f9b" stroke-width="1"/><path d="M4.5 2.5 V6.5" stroke="#2b3f9b" stroke-width="1"/></svg><svg class="b" style="left:91px;top:335px;" width="13" height="13" viewBox="0 0 13 13"><rect x="0.5" y="0.5" width="12" height="12" fill="#3a4199"/><rect x="0.5" y="0" width="10.8" height="11" fill="url(#bk)"/><path d="M11.8 .5 V12" stroke="#f2f3fb" stroke-width=".9"/><path d="M1.5 11.5 H12" stroke="#dfe1f4" stroke-width=".9"/></svg><div class="t tr" style="left:108px;top:341.69000000000005px;transform:translateY(-50%) scaleX(0.9051);transform-origin:0 50%;">30 - Lohn Ärzte</div><svg class="b" style="left:74px;top:351px;" width="9" height="9" viewBox="0 0 9 9"><rect x=".5" y=".5" width="8" height="8" rx="1" fill="#fdfdfd" stroke="#a4a8b0"/><rect x="1.5" y="4.5" width="6" height="3" fill="#e4e7ec"/><path d="M2.5 4.5 H6.5" stroke="#2b3f9b" stroke-width="1"/><path d="M4.5 2.5 V6.5" stroke="#2b3f9b" stroke-width="1"/></svg><svg class="b" style="left:91px;top:349px;" width="13" height="13" viewBox="0 0 13 13"><rect x="0.5" y="0.5" width="12" height="12" fill="#3a4199"/><rect x="0.5" y="0" width="10.8" height="11" fill="url(#bk)"/><path d="M11.8 .5 V12" stroke="#f2f3fb" stroke-width=".9"/><path d="M1.5 11.5 H12" stroke="#dfe1f4" stroke-width=".9"/></svg><div class="t tr" style="left:108px;top:356.22px;transform:translateY(-50%) scaleX(0.8944);transform-origin:0 50%;">31 - Lohn Pflege</div><svg class="b" style="left:74px;top:366px;" width="9" height="9" viewBox="0 0 9 9"><rect x=".5" y=".5" width="8" height="8" rx="1" fill="#fdfdfd" stroke="#a4a8b0"/><rect x="1.5" y="4.5" width="6" height="3" fill="#e4e7ec"/><path d="M2.5 4.5 H6.5" stroke="#2b3f9b" stroke-width="1"/><path d="M4.5 2.5 V6.5" stroke="#2b3f9b" stroke-width="1"/></svg><svg class="b" style="left:91px;top:364px;" width="13" height="13" viewBox="0 0 13 13"><rect x="0.5" y="0.5" width="12" height="12" fill="#3a4199"/><rect x="0.5" y="0" width="10.8" height="11" fill="url(#bk)"/><path d="M11.8 .5 V12" stroke="#f2f3fb" stroke-width=".9"/><path d="M1.5 11.5 H12" stroke="#dfe1f4" stroke-width=".9"/></svg><div class="t tr" style="left:108px;top:370.75px;transform:translateY(-50%) scaleX(0.8915);transform-origin:0 50%;">32 - Lohn andere Fachbereiche</div><svg class="b" style="left:74px;top:380px;" width="9" height="9" viewBox="0 0 9 9"><rect x=".5" y=".5" width="8" height="8" rx="1" fill="#fdfdfd" stroke="#a4a8b0"/><rect x="1.5" y="4.5" width="6" height="3" fill="#e4e7ec"/><path d="M2.5 4.5 H6.5" stroke="#2b3f9b" stroke-width="1"/><path d="M4.5 2.5 V6.5" stroke="#2b3f9b" stroke-width="1"/></svg><svg class="b" style="left:91px;top:378px;" width="13" height="13" viewBox="0 0 13 13"><rect x="0.5" y="0.5" width="12" height="12" fill="#3a4199"/><rect x="0.5" y="0" width="10.8" height="11" fill="url(#bk)"/><path d="M11.8 .5 V12" stroke="#f2f3fb" stroke-width=".9"/><path d="M1.5 11.5 H12" stroke="#dfe1f4" stroke-width=".9"/></svg><div class="t tr" style="left:108px;top:385.28px;transform:translateY(-50%) scaleX(0.8908);transform-origin:0 50%;">33 - Lohn Leitung und Verwaltung</div><svg class="b" style="left:74px;top:395px;" width="9" height="9" viewBox="0 0 9 9"><rect x=".5" y=".5" width="8" height="8" rx="1" fill="#fdfdfd" stroke="#a4a8b0"/><rect x="1.5" y="4.5" width="6" height="3" fill="#e4e7ec"/><path d="M2.5 4.5 H6.5" stroke="#2b3f9b" stroke-width="1"/><path d="M4.5 2.5 V6.5" stroke="#2b3f9b" stroke-width="1"/></svg><svg class="b" style="left:91px;top:393px;" width="13" height="13" viewBox="0 0 13 13"><rect x="0.5" y="0.5" width="12" height="12" fill="#3a4199"/><rect x="0.5" y="0" width="10.8" height="11" fill="url(#bk)"/><path d="M11.8 .5 V12" stroke="#f2f3fb" stroke-width=".9"/><path d="M1.5 11.5 H12" stroke="#dfe1f4" stroke-width=".9"/></svg><div class="t tr" style="left:108px;top:399.80999999999995px;transform:translateY(-50%) scaleX(0.9086);transform-origin:0 50%;">34 - Lohn Ökonomie und Hausdienst (Hotellerie</div><svg class="b" style="left:74px;top:409px;" width="9" height="9" viewBox="0 0 9 9"><rect x=".5" y=".5" width="8" height="8" rx="1" fill="#fdfdfd" stroke="#a4a8b0"/><rect x="1.5" y="4.5" width="6" height="3" fill="#e4e7ec"/><path d="M2.5 4.5 H6.5" stroke="#2b3f9b" stroke-width="1"/><path d="M4.5 2.5 V6.5" stroke="#2b3f9b" stroke-width="1"/></svg><svg class="b" style="left:91px;top:407px;" width="13" height="13" viewBox="0 0 13 13"><rect x="0.5" y="0.5" width="12" height="12" fill="#3a4199"/><rect x="0.5" y="0" width="10.8" height="11" fill="url(#bk)"/><path d="M11.8 .5 V12" stroke="#f2f3fb" stroke-width=".9"/><path d="M1.5 11.5 H12" stroke="#dfe1f4" stroke-width=".9"/></svg><div class="t tr" style="left:108px;top:414.3399999999999px;transform:translateY(-50%) scaleX(0.9146);transform-origin:0 50%;">35 - Lohn Technische Dienste</div><svg class="b" style="left:74px;top:424px;" width="9" height="9" viewBox="0 0 9 9"><rect x=".5" y=".5" width="8" height="8" rx="1" fill="#fdfdfd" stroke="#a4a8b0"/><rect x="1.5" y="4.5" width="6" height="3" fill="#e4e7ec"/><path d="M2.5 4.5 H6.5" stroke="#2b3f9b" stroke-width="1"/><path d="M4.5 2.5 V6.5" stroke="#2b3f9b" stroke-width="1"/></svg><svg class="b" style="left:91px;top:422px;" width="13" height="13" viewBox="0 0 13 13"><rect x="0.5" y="0.5" width="12" height="12" fill="#3a4199"/><rect x="0.5" y="0" width="10.8" height="11" fill="url(#bk)"/><path d="M11.8 .5 V12" stroke="#f2f3fb" stroke-width=".9"/><path d="M1.5 11.5 H12" stroke="#dfe1f4" stroke-width=".9"/></svg><div class="t tr" style="left:108px;top:428.87px;transform:translateY(-50%) scaleX(0.9108);transform-origin:0 50%;">37 - Sozialversicherungsaufwand</div><svg class="b" style="left:74px;top:438px;" width="9" height="9" viewBox="0 0 9 9"><rect x=".5" y=".5" width="8" height="8" rx="1" fill="#fdfdfd" stroke="#a4a8b0"/><rect x="1.5" y="4.5" width="6" height="3" fill="#e4e7ec"/><path d="M2.5 4.5 H6.5" stroke="#2b3f9b" stroke-width="1"/><path d="M4.5 2.5 V6.5" stroke="#2b3f9b" stroke-width="1"/></svg><svg class="b" style="left:91px;top:436px;" width="13" height="13" viewBox="0 0 13 13"><rect x="0.5" y="0.5" width="12" height="12" fill="#3a4199"/><rect x="0.5" y="0" width="10.8" height="11" fill="url(#bk)"/><path d="M11.8 .5 V12" stroke="#f2f3fb" stroke-width=".9"/><path d="M1.5 11.5 H12" stroke="#dfe1f4" stroke-width=".9"/></svg><div class="t tr" style="left:108px;top:443.4px;transform:translateY(-50%) scaleX(0.8915);transform-origin:0 50%;">38 - Honorare für Leistungen Dritter</div><svg class="b" style="left:74px;top:453px;" width="9" height="9" viewBox="0 0 9 9"><rect x=".5" y=".5" width="8" height="8" rx="1" fill="#fdfdfd" stroke="#a4a8b0"/><rect x="1.5" y="4.5" width="6" height="3" fill="#e4e7ec"/><path d="M2.5 4.5 H6.5" stroke="#2b3f9b" stroke-width="1"/><path d="M4.5 2.5 V6.5" stroke="#2b3f9b" stroke-width="1"/></svg><svg class="b" style="left:91px;top:451px;" width="13" height="13" viewBox="0 0 13 13"><rect x="0.5" y="0.5" width="12" height="12" fill="#3a4199"/><rect x="0.5" y="0" width="10.8" height="11" fill="url(#bk)"/><path d="M11.8 .5 V12" stroke="#f2f3fb" stroke-width=".9"/><path d="M1.5 11.5 H12" stroke="#dfe1f4" stroke-width=".9"/></svg><div class="t tr" style="left:108px;top:457.93000000000006px;transform:translateY(-50%) scaleX(0.8976);transform-origin:0 50%;">39 - Personalnebenaufwand</div><svg class="b" style="left:57px;top:467px;" width="9" height="9" viewBox="0 0 9 9"><rect x=".5" y=".5" width="8" height="8" rx="1" fill="#fdfdfd" stroke="#a4a8b0"/><rect x="1.5" y="4.5" width="6" height="3" fill="#e4e7ec"/><path d="M2.5 4.5 H6.5" stroke="#2b3f9b" stroke-width="1"/></svg><svg class="b" style="left:73.19999999999999px;top:464px;" width="16" height="15" viewBox="0 0 16 15"><path d="M6 4 L13.5 3 L14.5 4.5 V12.5 L7 14.5 Z" fill="#7a7ec8" stroke="#5a5fb5" stroke-width=".6"/>
<path d="M1 1.2 Q3.5 .8 5.5 3.5 L6 14 Q4 11.5 1.6 11.2 Z" fill="#fff" stroke="#4d52ad" stroke-width="1"/>
<path d="M5.5 3.5 Q7.5 .8 11 1.2 L11.4 11 Q8 11.2 6 14 Z" fill="#eef0f8" stroke="#4d52ad" stroke-width="1"/><path d="M2.8 2.5 Q3.8 3 4.4 4.2 L4.8 11.2" stroke="#c9cbe6" stroke-width=".8" fill="none"/></svg><div class="t tr" style="left:91px;top:472.46000000000004px;transform:translateY(-50%) scaleX(0.8944);transform-origin:0 50%;">5 - Übriger betrieblicher Aufwand</div><svg class="b" style="left:74px;top:482px;" width="9" height="9" viewBox="0 0 9 9"><rect x=".5" y=".5" width="8" height="8" rx="1" fill="#fdfdfd" stroke="#a4a8b0"/><rect x="1.5" y="4.5" width="6" height="3" fill="#e4e7ec"/><path d="M2.5 4.5 H6.5" stroke="#2b3f9b" stroke-width="1"/><path d="M4.5 2.5 V6.5" stroke="#2b3f9b" stroke-width="1"/></svg><svg class="b" style="left:91px;top:480px;" width="13" height="13" viewBox="0 0 13 13"><rect x="0.5" y="0.5" width="12" height="12" fill="#3a4199"/><rect x="0.5" y="0" width="10.8" height="11" fill="url(#bk)"/><path d="M11.8 .5 V12" stroke="#f2f3fb" stroke-width=".9"/><path d="M1.5 11.5 H12" stroke="#dfe1f4" stroke-width=".9"/></svg><div class="t tr" style="left:108px;top:486.99px;transform:translateY(-50%) scaleX(0.9076);transform-origin:0 50%;">40 - Medizinischer Bedarf</div><svg class="b" style="left:74px;top:497px;" width="9" height="9" viewBox="0 0 9 9"><rect x=".5" y=".5" width="8" height="8" rx="1" fill="#fdfdfd" stroke="#a4a8b0"/><rect x="1.5" y="4.5" width="6" height="3" fill="#e4e7ec"/><path d="M2.5 4.5 H6.5" stroke="#2b3f9b" stroke-width="1"/><path d="M4.5 2.5 V6.5" stroke="#2b3f9b" stroke-width="1"/></svg><svg class="b" style="left:91px;top:495px;" width="13" height="13" viewBox="0 0 13 13"><rect x="0.5" y="0.5" width="12" height="12" fill="#3a4199"/><rect x="0.5" y="0" width="10.8" height="11" fill="url(#bk)"/><path d="M11.8 .5 V12" stroke="#f2f3fb" stroke-width=".9"/><path d="M1.5 11.5 H12" stroke="#dfe1f4" stroke-width=".9"/></svg><div class="t tr" style="left:108px;top:501.52px;transform:translateY(-50%) scaleX(0.9037);transform-origin:0 50%;">41 - Lebensmittel und Getränke</div><svg class="b" style="left:74px;top:511px;" width="9" height="9" viewBox="0 0 9 9"><rect x=".5" y=".5" width="8" height="8" rx="1" fill="#fdfdfd" stroke="#a4a8b0"/><rect x="1.5" y="4.5" width="6" height="3" fill="#e4e7ec"/><path d="M2.5 4.5 H6.5" stroke="#2b3f9b" stroke-width="1"/><path d="M4.5 2.5 V6.5" stroke="#2b3f9b" stroke-width="1"/></svg><svg class="b" style="left:91px;top:509px;" width="13" height="13" viewBox="0 0 13 13"><rect x="0.5" y="0.5" width="12" height="12" fill="#3a4199"/><rect x="0.5" y="0" width="10.8" height="11" fill="url(#bk)"/><path d="M11.8 .5 V12" stroke="#f2f3fb" stroke-width=".9"/><path d="M1.5 11.5 H12" stroke="#dfe1f4" stroke-width=".9"/></svg><div class="t tr" style="left:108px;top:516.05px;transform:translateY(-50%) scaleX(0.8998);transform-origin:0 50%;">42 - Haushalt</div><svg class="b" style="left:74px;top:526px;" width="9" height="9" viewBox="0 0 9 9"><rect x=".5" y=".5" width="8" height="8" rx="1" fill="#fdfdfd" stroke="#a4a8b0"/><rect x="1.5" y="4.5" width="6" height="3" fill="#e4e7ec"/><path d="M2.5 4.5 H6.5" stroke="#2b3f9b" stroke-width="1"/><path d="M4.5 2.5 V6.5" stroke="#2b3f9b" stroke-width="1"/></svg><svg class="b" style="left:91px;top:524px;" width="13" height="13" viewBox="0 0 13 13"><rect x="0.5" y="0.5" width="12" height="12" fill="#3a4199"/><rect x="0.5" y="0" width="10.8" height="11" fill="url(#bk)"/><path d="M11.8 .5 V12" stroke="#f2f3fb" stroke-width=".9"/><path d="M1.5 11.5 H12" stroke="#dfe1f4" stroke-width=".9"/></svg><div class="t tr" style="left:108px;top:530.5799999999999px;transform:translateY(-50%) scaleX(0.8963);transform-origin:0 50%;">43 - Unterhalt und Reparaturen Im/Mo/Fa</div><svg class="b" style="left:92px;top:538px;" width="11" height="13" viewBox="0 0 11 13"><path d="M.5 .5 H7 L10.5 4 V12.5 H.5 Z" fill="#fff" stroke="#7d8499"/><path d="M7 .5 V4 H10.5" fill="#dfe6f5" stroke="#7d8499" stroke-width=".8"/></svg><div class="t tr" style="left:108px;top:545.11px;transform:translateY(-50%) scaleX(0.9127);transform-origin:0 50%;">4300 - Unterhalt und Reparaturen immobile Sac</div><svg class="b" style="left:74px;top:555px;" width="9" height="9" viewBox="0 0 9 9"><rect x=".5" y=".5" width="8" height="8" rx="1" fill="#fdfdfd" stroke="#a4a8b0"/><rect x="1.5" y="4.5" width="6" height="3" fill="#e4e7ec"/><path d="M2.5 4.5 H6.5" stroke="#2b3f9b" stroke-width="1"/><path d="M4.5 2.5 V6.5" stroke="#2b3f9b" stroke-width="1"/></svg><svg class="b" style="left:91px;top:553px;" width="13" height="13" viewBox="0 0 13 13"><rect x="0.5" y="0.5" width="12" height="12" fill="#3a4199"/><rect x="0.5" y="0" width="10.8" height="11" fill="url(#bk)"/><path d="M11.8 .5 V12" stroke="#f2f3fb" stroke-width=".9"/><path d="M1.5 11.5 H12" stroke="#dfe1f4" stroke-width=".9"/></svg><div class="t tr" style="left:108px;top:559.64px;transform:translateY(-50%) scaleX(0.9043);transform-origin:0 50%;">44b - Aufwand für Anlagenutzung</div><svg class="b" style="left:74px;top:569px;" width="9" height="9" viewBox="0 0 9 9"><rect x=".5" y=".5" width="8" height="8" rx="1" fill="#fdfdfd" stroke="#a4a8b0"/><rect x="1.5" y="4.5" width="6" height="3" fill="#e4e7ec"/><path d="M2.5 4.5 H6.5" stroke="#2b3f9b" stroke-width="1"/><path d="M4.5 2.5 V6.5" stroke="#2b3f9b" stroke-width="1"/></svg><svg class="b" style="left:91px;top:567px;" width="13" height="13" viewBox="0 0 13 13"><rect x="0.5" y="0.5" width="12" height="12" fill="#3a4199"/><rect x="0.5" y="0" width="10.8" height="11" fill="url(#bk)"/><path d="M11.8 .5 V12" stroke="#f2f3fb" stroke-width=".9"/><path d="M1.5 11.5 H12" stroke="#dfe1f4" stroke-width=".9"/></svg><div class="t tr" style="left:108px;top:574.17px;transform:translateY(-50%) scaleX(0.8988);transform-origin:0 50%;">45 - Energie und Wasser</div><svg class="b" style="left:74px;top:584px;" width="9" height="9" viewBox="0 0 9 9"><rect x=".5" y=".5" width="8" height="8" rx="1" fill="#fdfdfd" stroke="#a4a8b0"/><rect x="1.5" y="4.5" width="6" height="3" fill="#e4e7ec"/><path d="M2.5 4.5 H6.5" stroke="#2b3f9b" stroke-width="1"/><path d="M4.5 2.5 V6.5" stroke="#2b3f9b" stroke-width="1"/></svg><svg class="b" style="left:91px;top:582px;" width="13" height="13" viewBox="0 0 13 13"><rect x="0.5" y="0.5" width="12" height="12" fill="#3a4199"/><rect x="0.5" y="0" width="10.8" height="11" fill="url(#bk)"/><path d="M11.8 .5 V12" stroke="#f2f3fb" stroke-width=".9"/><path d="M1.5 11.5 H12" stroke="#dfe1f4" stroke-width=".9"/></svg><div class="t tr" style="left:108px;top:588.6999999999999px;transform:translateY(-50%) scaleX(0.8946);transform-origin:0 50%;">47 - Büro und Verwaltung</div><svg class="b" style="left:74px;top:598px;" width="9" height="9" viewBox="0 0 9 9"><rect x=".5" y=".5" width="8" height="8" rx="1" fill="#fdfdfd" stroke="#a4a8b0"/><rect x="1.5" y="4.5" width="6" height="3" fill="#e4e7ec"/><path d="M2.5 4.5 H6.5" stroke="#2b3f9b" stroke-width="1"/><path d="M4.5 2.5 V6.5" stroke="#2b3f9b" stroke-width="1"/></svg><svg class="b" style="left:91px;top:596px;" width="13" height="13" viewBox="0 0 13 13"><rect x="0.5" y="0.5" width="12" height="12" fill="#3a4199"/><rect x="0.5" y="0" width="10.8" height="11" fill="url(#bk)"/><path d="M11.8 .5 V12" stroke="#f2f3fb" stroke-width=".9"/><path d="M1.5 11.5 H12" stroke="#dfe1f4" stroke-width=".9"/></svg><div class="t tr" style="left:108px;top:603.23px;transform:translateY(-50%) scaleX(0.9021);transform-origin:0 50%;">48 - Übriger Bewohnerbezogener Aufwand</div><svg class="b" style="left:74px;top:613px;" width="9" height="9" viewBox="0 0 9 9"><rect x=".5" y=".5" width="8" height="8" rx="1" fill="#fdfdfd" stroke="#a4a8b0"/><rect x="1.5" y="4.5" width="6" height="3" fill="#e4e7ec"/><path d="M2.5 4.5 H6.5" stroke="#2b3f9b" stroke-width="1"/><path d="M4.5 2.5 V6.5" stroke="#2b3f9b" stroke-width="1"/></svg><svg class="b" style="left:91px;top:611px;" width="13" height="13" viewBox="0 0 13 13"><rect x="0.5" y="0.5" width="12" height="12" fill="#3a4199"/><rect x="0.5" y="0" width="10.8" height="11" fill="url(#bk)"/><path d="M11.8 .5 V12" stroke="#f2f3fb" stroke-width=".9"/><path d="M1.5 11.5 H12" stroke="#dfe1f4" stroke-width=".9"/></svg><div class="t tr" style="left:108px;top:617.76px;transform:translateY(-50%) scaleX(0.8953);transform-origin:0 50%;">49 - Übriger Sachaufwand</div><svg class="b" style="left:57px;top:627px;" width="9" height="9" viewBox="0 0 9 9"><rect x=".5" y=".5" width="8" height="8" rx="1" fill="#fdfdfd" stroke="#a4a8b0"/><rect x="1.5" y="4.5" width="6" height="3" fill="#e4e7ec"/><path d="M2.5 4.5 H6.5" stroke="#2b3f9b" stroke-width="1"/></svg><svg class="b" style="left:73.19999999999999px;top:624px;" width="16" height="15" viewBox="0 0 16 15"><path d="M6 4 L13.5 3 L14.5 4.5 V12.5 L7 14.5 Z" fill="#7a7ec8" stroke="#5a5fb5" stroke-width=".6"/>
<path d="M1 1.2 Q3.5 .8 5.5 3.5 L6 14 Q4 11.5 1.6 11.2 Z" fill="#fff" stroke="#4d52ad" stroke-width="1"/>
<path d="M5.5 3.5 Q7.5 .8 11 1.2 L11.4 11 Q8 11.2 6 14 Z" fill="#eef0f8" stroke="#4d52ad" stroke-width="1"/><path d="M2.8 2.5 Q3.8 3 4.4 4.2 L4.8 11.2" stroke="#c9cbe6" stroke-width=".8" fill="none"/></svg><div class="t tr" style="left:91px;top:632.29px;transform:translateY(-50%) scaleX(0.9100);transform-origin:0 50%;">6 - Abschreibungen und Wertberichtigungen AV</div><svg class="b" style="left:74px;top:642px;" width="9" height="9" viewBox="0 0 9 9"><rect x=".5" y=".5" width="8" height="8" rx="1" fill="#fdfdfd" stroke="#a4a8b0"/><rect x="1.5" y="4.5" width="6" height="3" fill="#e4e7ec"/><path d="M2.5 4.5 H6.5" stroke="#2b3f9b" stroke-width="1"/><path d="M4.5 2.5 V6.5" stroke="#2b3f9b" stroke-width="1"/></svg><svg class="b" style="left:91px;top:640px;" width="13" height="13" viewBox="0 0 13 13"><rect x="0.5" y="0.5" width="12" height="12" fill="#3a4199"/><rect x="0.5" y="0" width="10.8" height="11" fill="url(#bk)"/><path d="M11.8 .5 V12" stroke="#f2f3fb" stroke-width=".9"/><path d="M1.5 11.5 H12" stroke="#dfe1f4" stroke-width=".9"/></svg><div class="t tr" style="left:108px;top:646.8199999999999px;transform:translateY(-50%) scaleX(0.9051);transform-origin:0 50%;">44a - Abschreibungen</div><svg class="b" style="left:57px;top:656px;" width="9" height="9" viewBox="0 0 9 9"><rect x=".5" y=".5" width="8" height="8" rx="1" fill="#fdfdfd" stroke="#a4a8b0"/><rect x="1.5" y="4.5" width="6" height="3" fill="#e4e7ec"/><path d="M2.5 4.5 H6.5" stroke="#2b3f9b" stroke-width="1"/><path d="M4.5 2.5 V6.5" stroke="#2b3f9b" stroke-width="1"/></svg><svg class="b" style="left:74px;top:654px;" width="13" height="13" viewBox="0 0 13 13"><rect x="0.5" y="0.5" width="12" height="12" fill="#3a4199"/><rect x="0.5" y="0" width="10.8" height="11" fill="url(#bk)"/><path d="M11.8 .5 V12" stroke="#f2f3fb" stroke-width=".9"/><path d="M1.5 11.5 H12" stroke="#dfe1f4" stroke-width=".9"/></svg><div class="t tr" style="left:91px;top:661.35px;transform:translateY(-50%) scaleX(0.8964);transform-origin:0 50%;">7 - Finanzaufwand und Finanzertrag</div><svg class="b" style="left:40px;top:671px;" width="9" height="9" viewBox="0 0 9 9"><rect x=".5" y=".5" width="8" height="8" rx="1" fill="#fdfdfd" stroke="#a4a8b0"/><rect x="1.5" y="4.5" width="6" height="3" fill="#e4e7ec"/><path d="M2.5 4.5 H6.5" stroke="#2b3f9b" stroke-width="1"/><path d="M4.5 2.5 V6.5" stroke="#2b3f9b" stroke-width="1"/></svg><svg class="b" style="left:57px;top:669px;" width="13" height="13" viewBox="0 0 13 13"><rect x="0.5" y="0.5" width="12" height="12" fill="#3a4199"/><rect x="0.5" y="0" width="10.8" height="11" fill="url(#bk)"/><path d="M11.8 .5 V12" stroke="#f2f3fb" stroke-width=".9"/><path d="M1.5 11.5 H12" stroke="#dfe1f4" stroke-width=".9"/></svg><div class="t tr" style="left:74px;top:675.88px;transform:translateY(-50%) scaleX(0.9007);transform-origin:0 50%;">8 - Betriebsfremder Aufwand und Ertrag</div><svg class="b" style="left:40px;top:683px;" width="13" height="13" viewBox="0 0 13 13"><rect x="0.5" y="0.5" width="12" height="12" fill="#3a4199"/><rect x="0.5" y="0" width="10.8" height="11" fill="url(#bk)"/><path d="M11.8 .5 V12" stroke="#f2f3fb" stroke-width=".9"/><path d="M1.5 11.5 H12" stroke="#dfe1f4" stroke-width=".9"/></svg><div class="t tr" style="left:57px;top:690.41px;transform:translateY(-50%) scaleX(0.9045);transform-origin:0 50%;">9 - Ausserord. einmaliger oder periodenfr. A/E</div><svg class="b" style="left:23px;top:700px;" width="9" height="9" viewBox="0 0 9 9"><rect x=".5" y=".5" width="8" height="8" rx="1" fill="#fdfdfd" stroke="#a4a8b0"/><rect x="1.5" y="4.5" width="6" height="3" fill="#e4e7ec"/><path d="M2.5 4.5 H6.5" stroke="#2b3f9b" stroke-width="1"/></svg><svg class="b" style="left:39.19999999999999px;top:697px;" width="16" height="15" viewBox="0 0 16 15"><path d="M6 4 L13.5 3 L14.5 4.5 V12.5 L7 14.5 Z" fill="#7a7ec8" stroke="#5a5fb5" stroke-width=".6"/>
<path d="M1 1.2 Q3.5 .8 5.5 3.5 L6 14 Q4 11.5 1.6 11.2 Z" fill="#fff" stroke="#4d52ad" stroke-width="1"/>
<path d="M5.5 3.5 Q7.5 .8 11 1.2 L11.4 11 Q8 11.2 6 14 Z" fill="#eef0f8" stroke="#4d52ad" stroke-width="1"/><path d="M2.8 2.5 Q3.8 3 4.4 4.2 L4.8 11.2" stroke="#c9cbe6" stroke-width=".8" fill="none"/></svg><div class="t tr" style="left:57px;top:704.9399999999999px;transform:translateY(-50%) scaleX(0.9024);transform-origin:0 50%;">11. - Jahresgewinn oder -Verlust</div><svg class="b" style="left:40px;top:714px;" width="9" height="9" viewBox="0 0 9 9"><rect x=".5" y=".5" width="8" height="8" rx="1" fill="#fdfdfd" stroke="#a4a8b0"/><rect x="1.5" y="4.5" width="6" height="3" fill="#e4e7ec"/><path d="M2.5 4.5 H6.5" stroke="#2b3f9b" stroke-width="1"/><path d="M4.5 2.5 V6.5" stroke="#2b3f9b" stroke-width="1"/></svg><svg class="b" style="left:57px;top:712px;" width="13" height="13" viewBox="0 0 13 13"><rect x="0.5" y="0.5" width="12" height="12" fill="#3a4199"/><rect x="0.5" y="0" width="10.8" height="11" fill="url(#bk)"/><path d="M11.8 .5 V12" stroke="#f2f3fb" stroke-width=".9"/><path d="M1.5 11.5 H12" stroke="#dfe1f4" stroke-width=".9"/></svg><div class="t tr" style="left:74px;top:719.4699999999999px;transform:translateY(-50%) scaleX(0.8990);transform-origin:0 50%;">81 - Erfolgsrechnung</div></div>
<div class="b" style="left:89px;top:969px;width:353px;height:18px;background:#f0f0f0;"></div>
<div class="b" style="left:108px;top:969px;width:266px;height:18px;background:#cdcdcd;"></div>
<svg class="b" style="left:93.5px;top:973.5px;" width="8" height="10" viewBox="0 0 8 10"><path d="M6.5 1 L1.5 5 L6.5 9" stroke="#4a4a4a" stroke-width="1.3" fill="none"/></svg>
<svg class="b" style="left:428px;top:973.5px;" width="8" height="10" viewBox="0 0 8 10"><path d="M1.5 1 L6.5 5 L1.5 9" stroke="#4a4a4a" stroke-width="1.3" fill="none"/></svg>
<div class="b" style="left:452px;top:207px;width:719px;height:800px;border:1px solid #a0a0a0;"></div>
<div class="b" style="left:453px;top:207px;width:137px;height:1px;background:#d9e8fb;"></div>
<svg class="b" style="left:452px;top:187px;" width="425" height="22" viewBox="0 0 425 22"><defs><linearGradient id="tbg" x1="0" y1="0" x2="0" y2="1"><stop offset="0" stop-color="#fbfdff"/><stop offset=".75" stop-color="#d9e8fb"/></linearGradient></defs>
<path d="M.5 22 V20.5 L20 1.6 H136 Q138.5 1.6 138.5 4 V22" fill="url(#tbg)" stroke="#9a9a9a"/>
<path d="M138.5 20.5 V4.5 Q138.5 2.5 140.5 2.5 H292 Q294.8 2.5 294.8 5 V20.5" fill="#d4e4fa" stroke="#9a9a9a"/>
<path d="M294.8 20.5 V4.5 Q294.8 2.5 296.8 2.5 H418.5 Q421.3 2.5 421.3 5 V20.5" fill="#d4e4fa" stroke="#9a9a9a"/></svg>
<div class="t f12 ctr" style="left:532.5px;top:197.7px;transform:translate(-50%,-50%) scaleX(0.9744);">Kontoinformationen</div>
<div class="t f12 ctr" style="left:671.3px;top:197.9px;transform:translate(-50%,-50%) scaleX(0.9907);">Individuelle Informationen</div>
<div class="t f12 ctr" style="left:812.6px;top:197.9px;transform:translate(-50%,-50%) scaleX(0.9970);">Individuelle Zusätze</div>
<div class="b" style="left:456px;top:214px;width:708px;height:634px;border:1px solid #c6c8cc;border-radius:3px;"></div><div class="t f12" style="left:466px;top:215.5px;background:#d9e8fb;padding:0 2px;margin-left:-2px;transform:translateY(-50%) scaleX(0.9839);transform-origin:0 50%;">Kontoinformationen</div>
<div class="t f12" style="left:469px;top:239.5px;transform:translateY(-50%) scaleX(0.9693);transform-origin:0 50%;">Kontonummer</div>
<div class="b grn" style="left:651px;top:229px;width:153px;height:20px;"></div>
<div class="t f12" style="left:654px;top:239.5px;">61</div>
<div class="t f12" style="left:811px;top:236.5px;transform:translateY(-50%) scaleX(1.0114);transform-origin:0 50%;">Sperren ab</div>
<div class="b" style="left:920px;top:229px;width:98px;height:19.5px;background:#ececec;border:1px solid #a9adb6;"></div>
<div class="t f12 gray" style="left:935.8px;top:240px;">.</div>
<div class="t f12 gray" style="left:953.2px;top:240px;">.</div>
<svg class="b" style="left:1008.2px;top:237.3px;" width="5" height="2.8" viewBox="0 0 5 2.8"><path d="M0 0 H5 L2.5 2.8 Z" fill="#55585f"/></svg>
<div class="t f12" style="left:469px;top:265.5px;transform:translateY(-50%) scaleX(0.9945);transform-origin:0 50%;">Bezeichnung</div>
<div class="b grn" style="left:651px;top:255.5px;width:367px;height:20px;"></div>
<div class="t f12" style="left:654px;top:266px;">Arzthonorare</div>
<div class="t f12" style="left:469px;top:291.5px;transform:translateY(-50%) scaleX(0.9908);transform-origin:0 50%;">Währung</div>
<div class="b dis" style="left:651px;top:281.5px;width:111.5px;height:19.5px;"></div><svg class="b" style="left:753.5px;top:290.25px;" width="6" height="3" viewBox="0 0 6 3"><path d="M0 0 H6 L3 3 Z" fill="#9aa0ad"/></svg>
<div class="t f12 gray" style="left:771px;top:294px;transform:translateY(-50%) scaleX(1.0105);transform-origin:0 50%;">Verdichten</div>
<div class="b" style="left:873px;top:286px;width:14px;height:14px;background:#fff;border:1px solid #c7cbd3;"></div><svg class="b" style="left:874px;top:287px;" width="12" height="12" viewBox="0 0 12 12"><path d="M2 6 L4.8 9 L10 2" stroke="#b5b8c0" stroke-width="1.4" fill="none"/></svg>
<div class="t f12 gray" style="left:898px;top:294px;transform:translateY(-50%) scaleX(0.9831);transform-origin:0 50%;">Seitenumbruch</div>
<div class="b" style="left:1000px;top:286px;width:14px;height:14px;background:#fff;border:1px solid #c7cbd3;"></div>
<div class="t f12" style="left:469px;top:319px;transform:translateY(-50%) scaleX(0.9728);transform-origin:0 50%;">Kontotyp</div>
<div class="b" style="left:664.5px;top:311.0px;width:14px;height:14px;background:#fff;border:1px solid #c2c6ce;border-radius:50%;"></div>
<div class="t f12 gray" style="left:683px;top:319.5px;transform:translateY(-50%) scaleX(1.0030);transform-origin:0 50%;">Aktiv</div>
<div class="b" style="left:747.5px;top:311.0px;width:14px;height:14px;background:#fff;border:1px solid #c2c6ce;border-radius:50%;"></div><div class="b" style="left:751.0px;top:314.5px;width:7px;height:7px;background:#c4c6cb;border-radius:50%;"></div>
<div class="t f12 gray" style="left:766.5px;top:319.5px;transform:translateY(-50%) scaleX(1.0500);transform-origin:0 50%;">Passiv</div>
<div class="b" style="left:832px;top:311.0px;width:14px;height:14px;background:#fff;border:1px solid #c2c6ce;border-radius:50%;"></div>
<div class="t f12 gray" style="left:851px;top:319.5px;transform:translateY(-50%) scaleX(0.9697);transform-origin:0 50%;">Aufwand</div>
<div class="b" style="left:931px;top:311.0px;width:14px;height:14px;background:#fff;border:1px solid #c2c6ce;border-radius:50%;"></div>
<div class="t f12 gray" style="left:950px;top:319.5px;transform:translateY(-50%) scaleX(0.9969);transform-origin:0 50%;">Ertrag</div>
<div class="t f12" style="left:469px;top:343.5px;transform:translateY(-50%) scaleX(1.0020);transform-origin:0 50%;">Verwendung</div>
<div class="t f12 gray" style="left:655px;top:345.5px;transform:translateY(-50%) scaleX(1.0067);transform-origin:0 50%;">Debitoren-Sammelkonto</div>
<div class="b" style="left:818px;top:338px;width:14px;height:14px;background:#fff;border:1px solid #c7cbd3;"></div>
<div class="t f12 gray" style="left:843.5px;top:345.0px;transform:translateY(-50%) scaleX(0.9893);transform-origin:0 50%;">Klient-Sammelkonto</div>
<div class="b" style="left:1000px;top:338px;width:14px;height:14px;background:#fff;border:1px solid #c7cbd3;"></div>
<div class="t f12 gray" style="left:655px;top:368.5px;transform:translateY(-50%) scaleX(0.9932);transform-origin:0 50%;">Kreditoren-Sammelkonto</div>
<div class="b" style="left:818px;top:361px;width:14px;height:14px;background:#fff;border:1px solid #c7cbd3;"></div>
<div class="t f12 gray" style="left:843.5px;top:368.0px;transform:translateY(-50%) scaleX(0.9896);transform-origin:0 50%;">Transitorisches Konto</div>
<div class="b" style="left:1000px;top:361px;width:14px;height:14px;background:#fff;border:1px solid #c7cbd3;"></div>
<div class="t f12 gray" style="left:655px;top:392px;transform:translateY(-50%) scaleX(0.9841);transform-origin:0 50%;">Bilanz-Kostenart</div>
<div class="b" style="left:818px;top:384px;width:14px;height:14px;background:#fff;border:1px solid #c7cbd3;"></div>
<div class="t f12 gray" style="left:843.5px;top:391.5px;transform:translateY(-50%) scaleX(0.9955);transform-origin:0 50%;">Gewinn/Verlust</div>
<div class="b" style="left:1000px;top:384px;width:14px;height:14px;background:#fff;border:1px solid #c7cbd3;"></div>
<div class="t f12 gray" style="left:655px;top:413.5px;transform:translateY(-50%) scaleX(1.0167);transform-origin:0 50%;">Anlagekonto</div>
<div class="b" style="left:818px;top:405px;width:14px;height:14px;background:#fff;border:1px solid #c7cbd3;"></div>
<div class="t f12 gray" style="left:843.5px;top:413.0px;transform:translateY(-50%) scaleX(1.0021);transform-origin:0 50%;">Anlage-Wertberichtigung</div>
<div class="b" style="left:1000px;top:405px;width:14px;height:14px;background:#fff;border:1px solid #c7cbd3;"></div>
<div class="t f12 gray" style="left:655px;top:437px;transform:translateY(-50%) scaleX(0.9571);transform-origin:0 50%;">OP geführt</div>
<div class="b" style="left:818px;top:428.5px;width:14px;height:14px;background:#fff;border:1px solid #c7cbd3;"></div>
<div class="t f12 gray" style="left:843.5px;top:436.5px;transform:translateY(-50%) scaleX(1.0076);transform-origin:0 50%;">muss ausgleichen</div>
<div class="b" style="left:1000px;top:428.5px;width:14px;height:14px;background:#fff;border:1px solid #c7cbd3;"></div>
<div class="t f12" style="left:469px;top:459.5px;transform:translateY(-50%) scaleX(0.9871);transform-origin:0 50%;">Kostenart</div>
<div class="b dis" style="left:651px;top:450px;width:364px;height:19.5px;"></div><svg class="b" style="left:1006px;top:458.75px;" width="6" height="3" viewBox="0 0 6 3"><path d="M0 0 H6 L3 3 Z" fill="#9aa0ad"/></svg>
<div class="b dis" style="left:1022px;top:450px;width:134px;height:19.5px;"></div><svg class="b" style="left:1147px;top:458.75px;" width="6" height="3" viewBox="0 0 6 3"><path d="M0 0 H6 L3 3 Z" fill="#9aa0ad"/></svg><div class="t f12 lgray" style="left:1025px;top:460.25px;transform:translateY(-50%) scaleX(0.9588);transform-origin:0 50%;">Nicht fixiert</div>
<div class="t f12" style="left:469px;top:485.5px;transform:translateY(-50%) scaleX(1.0004);transform-origin:0 50%;">KST/KTR-Direktverbuchung</div>
<div class="b dis" style="left:651px;top:475.4px;width:364px;height:19.5px;"></div><svg class="b" style="left:1006px;top:484.15px;" width="6" height="3" viewBox="0 0 6 3"><path d="M0 0 H6 L3 3 Z" fill="#9aa0ad"/></svg>
<div class="b dis" style="left:1022px;top:475.4px;width:134px;height:19.5px;"></div><svg class="b" style="left:1147px;top:484.15px;" width="6" height="3" viewBox="0 0 6 3"><path d="M0 0 H6 L3 3 Z" fill="#9aa0ad"/></svg><div class="t f12 lgray" style="left:1025px;top:485.65px;transform:translateY(-50%) scaleX(0.9588);transform-origin:0 50%;">Nicht fixiert</div>
<div class="t f12" style="left:469px;top:511px;transform:translateY(-50%) scaleX(0.9817);transform-origin:0 50%;">Steuersatz</div>
<div class="b dis" style="left:651px;top:501px;width:364px;height:19.5px;"></div><svg class="b" style="left:1006px;top:509.75px;" width="6" height="3" viewBox="0 0 6 3"><path d="M0 0 H6 L3 3 Z" fill="#9aa0ad"/></svg>
<div class="b dis" style="left:1022px;top:501px;width:134px;height:19.5px;"></div><svg class="b" style="left:1147px;top:509.75px;" width="6" height="3" viewBox="0 0 6 3"><path d="M0 0 H6 L3 3 Z" fill="#9aa0ad"/></svg><div class="t f12 lgray" style="left:1025px;top:511.25px;transform:translateY(-50%) scaleX(0.9588);transform-origin:0 50%;">Nicht fixiert</div>
<div class="t f12" style="left:469px;top:537.5px;transform:translateY(-50%) scaleX(0.9783);transform-origin:0 50%;">Skonto Konto</div>
<div class="b dis" style="left:651px;top:527px;width:364px;height:19.5px;"></div><svg class="b" style="left:1006px;top:535.75px;" width="6" height="3" viewBox="0 0 6 3"><path d="M0 0 H6 L3 3 Z" fill="#9aa0ad"/></svg>
<div class="t f12" style="left:469px;top:562px;transform:translateY(-50%) scaleX(0.9808);transform-origin:0 50%;">Skonto KST</div>
<div class="b dis" style="left:651px;top:552.3px;width:364px;height:19.5px;"></div><svg class="b" style="left:1006px;top:561.05px;" width="6" height="3" viewBox="0 0 6 3"><path d="M0 0 H6 L3 3 Z" fill="#9aa0ad"/></svg>
<div class="t f12" style="left:469px;top:588px;transform:translateY(-50%) scaleX(0.9688);transform-origin:0 50%;">Konto Kursgewinne</div>
<div class="b dis" style="left:651px;top:578px;width:364px;height:19.5px;"></div><svg class="b" style="left:1006px;top:586.75px;" width="6" height="3" viewBox="0 0 6 3"><path d="M0 0 H6 L3 3 Z" fill="#9aa0ad"/></svg>
<div class="t f12" style="left:469px;top:615px;transform:translateY(-50%) scaleX(0.9701);transform-origin:0 50%;">Konto Kursverluste</div>
<div class="b dis" style="left:651px;top:604px;width:364px;height:19.5px;"></div><svg class="b" style="left:1006px;top:612.75px;" width="6" height="3" viewBox="0 0 6 3"><path d="M0 0 H6 L3 3 Z" fill="#9aa0ad"/></svg>
<div class="t f12" style="left:469px;top:666.5px;transform:translateY(-50%) scaleX(0.9628);transform-origin:0 50%;">IC-Code</div>
<div class="b dis" style="left:651px;top:655.4px;width:364px;height:19.5px;"></div><svg class="b" style="left:1006px;top:664.15px;" width="6" height="3" viewBox="0 0 6 3"><path d="M0 0 H6 L3 3 Z" fill="#9aa0ad"/></svg>
<div class="t f12" style="left:469px;top:640px;transform:translateY(-50%) scaleX(0.9819);transform-origin:0 50%;">Statistik-Code</div>
<div class="b" style="left:651px;top:630px;width:123px;height:19.5px;background:#fff;border:1px solid #7a7f8a;"></div>
<div class="t f12" style="left:469px;top:692px;transform:translateY(-50%) scaleX(0.9863);transform-origin:0 50%;">Notiz</div>
<div class="b grn" style="left:651px;top:681px;width:364px;height:60px;"></div>
<div class="b" style="left:994px;top:682px;width:20px;height:58px;background:#f0f0f0;"></div>
<svg class="b" style="left:999px;top:688.5px;" width="10" height="7" viewBox="0 0 10 7"><path d="M1 6 L5 1.5 L9 6" stroke="#a0a0a0" stroke-width="1.1" fill="none"/></svg>
<svg class="b" style="left:999px;top:727.5px;" width="10" height="7" viewBox="0 0 10 7"><path d="M1 1 L5 5.5 L9 1" stroke="#a0a0a0" stroke-width="1.1" fill="none"/></svg>
<div class="b" style="left:456px;top:747px;width:571px;height:54px;border:1px solid #c6c8cc;border-radius:3px;"></div><div class="t f12" style="left:466px;top:748.5px;background:#d9e8fb;padding:0 2px;margin-left:-2px;transform:translateY(-50%) scaleX(1.0089);transform-origin:0 50%;">Kippkonto</div>
<div class="t f12" style="left:473px;top:764px;transform:translateY(-50%) scaleX(1.0148);transform-origin:0 50%;">Zustand</div>
<div class="b dis" style="left:651px;top:752.4px;width:364px;height:19.5px;"></div><svg class="b" style="left:1006px;top:761.15px;" width="6" height="3" viewBox="0 0 6 3"><path d="M0 0 H6 L3 3 Z" fill="#9aa0ad"/></svg>
<div class="t f12" style="left:473px;top:787px;transform:translateY(-50%) scaleX(0.9994);transform-origin:0 50%;">Ausgabe nach Konto</div>
<div class="b dis" style="left:651px;top:776.4px;width:364px;height:19.5px;"></div><svg class="b" style="left:1006px;top:785.15px;" width="6" height="3" viewBox="0 0 6 3"><path d="M0 0 H6 L3 3 Z" fill="#9aa0ad"/></svg>
<div class="b" style="left:456px;top:858.4px;width:573px;height:94.6px;border:1px solid #c6c8cc;border-radius:3px;"></div><div class="t f12" style="left:466px;top:859.9px;background:#d9e8fb;padding:0 2px;margin-left:-2px;transform:translateY(-50%) scaleX(1.0490);transform-origin:0 50%;">Saldo</div>
<div class="t f12 gray" style="left:469px;top:880px;transform:translateY(-50%) scaleX(0.9905);transform-origin:0 50%;">Saldo unterdrücken</div>
<div class="b" style="left:653px;top:872px;width:14px;height:14px;background:#fff;border:1px solid #c7cbd3;"></div>
<div class="t f12b" style="left:678px;top:876px;transform:translateY(-50%) scaleX(1.0828);transform-origin:0 50%;">Kontowährung</div>
<div class="t f12b" style="left:866px;top:876px;transform:translateY(-50%) scaleX(1.0995);transform-origin:0 50%;">Basiswährung</div>
<div class="t f12b" style="left:469px;top:905px;transform:translateY(-50%) scaleX(1.1470);transform-origin:0 50%;">Inkl. unverarbeitete</div>
<div class="b dis" style="left:651px;top:894.3px;width:153px;height:19.5px;"></div><div class="t f12 lgray" style="left:802.2px;top:904.3499999999999px;transform:translate(-100%,-50%);">0.00</div>
<div class="b dis" style="left:864px;top:894.3px;width:152px;height:19.5px;"></div><div class="t f12 lgray" style="left:1014.2px;top:904.3499999999999px;transform:translate(-100%,-50%);">0.00</div>
<div class="t f12b" style="left:469px;top:930.5px;transform:translateY(-50%) scaleX(1.1360);transform-origin:0 50%;">Exkl. unverarbeitete</div>
<div class="b dis" style="left:651px;top:920.3px;width:153px;height:19.5px;"></div><div class="t f12 lgray" style="left:802.2px;top:930.3499999999999px;transform:translate(-100%,-50%);">0.00</div>
<div class="b dis" style="left:864px;top:919.4px;width:152px;height:19.5px;"></div><div class="t f12 lgray" style="left:1014.2px;top:929.4499999999999px;transform:translate(-100%,-50%);">0.00</div>
<div class="b" style="left:456px;top:961.4px;width:571px;height:60px;border:1px solid #c6c8cc;border-radius:3px;"></div><div class="t f12" style="left:466px;top:962.9px;background:#d9e8fb;padding:0 2px;margin-left:-2px;transform:translateY(-50%) scaleX(0.9933);transform-origin:0 50%;">Konto- Budget</div>
<div class="t f12" style="left:469px;top:983.5px;transform:translateY(-50%) scaleX(1.0026);transform-origin:0 50%;">Budget- Variante</div>
<div class="b grn" style="left:651px;top:971.2px;width:366px;height:30px;"></div>
<div class="t f12" style="left:654px;top:982px;transform:translateY(-50%) scaleX(1.0136);transform-origin:0 50%;">0&nbsp; - Standard-Budget</div>
</div>
</body></html>
